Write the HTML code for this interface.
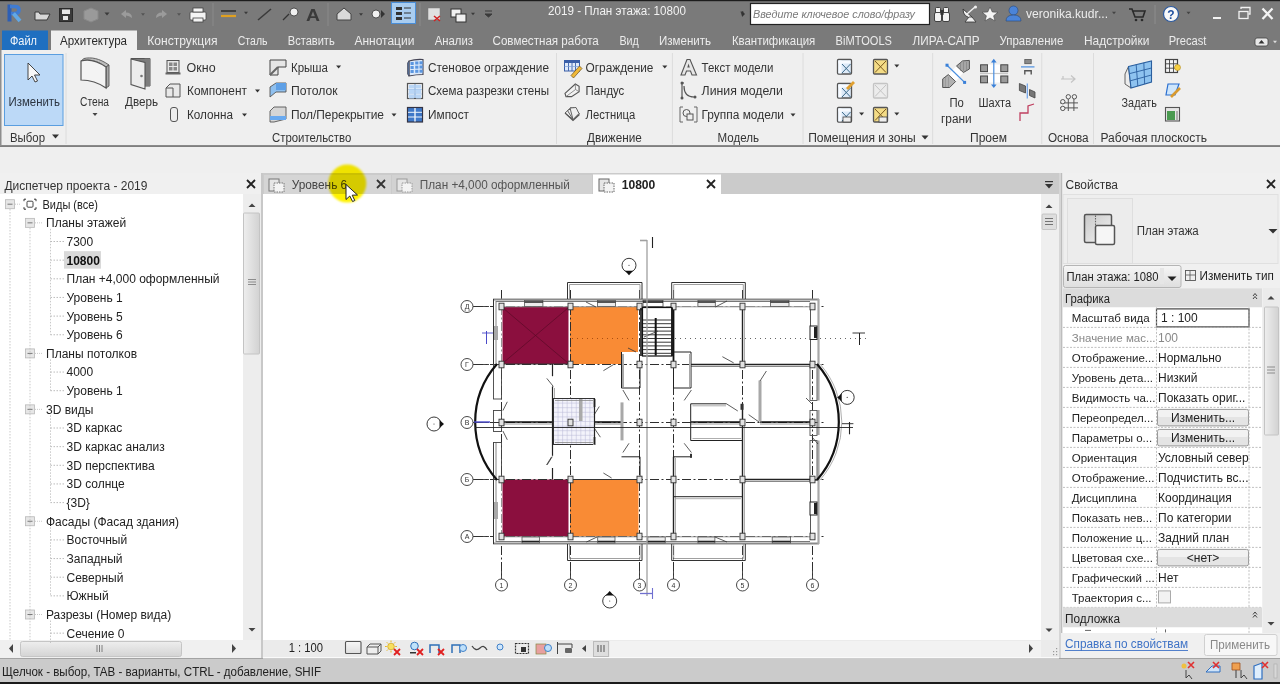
<!DOCTYPE html>
<html><head><meta charset="utf-8"><title>Revit</title>
<style>
html,body{margin:0;padding:0;width:1280px;height:684px;overflow:hidden;background:#777;}
svg{display:block;font-family:"Liberation Sans",sans-serif;}
</style></head><body>
<svg width="1280" height="684" viewBox="0 0 1280 684">
<defs><linearGradient id="thumbv" x1="0" y1="0" x2="1" y2="0"><stop offset="0" stop-color="#eeeeee"/><stop offset="1" stop-color="#d2d2d2"/></linearGradient><linearGradient id="thumbh" x1="0" y1="0" x2="0" y2="1"><stop offset="0" stop-color="#eeeeee"/><stop offset="1" stop-color="#d4d4d4"/></linearGradient><linearGradient id="docg" x1="0" y1="0" x2="1" y2="1"><stop offset="0" stop-color="#c8c8c8"/><stop offset="1" stop-color="#f4f4f4"/></linearGradient><linearGradient id="btng" x1="0" y1="0" x2="0" y2="1"><stop offset="0" stop-color="#f6f6f6"/><stop offset="1" stop-color="#dedede"/></linearGradient><filter id="blur1" x="-20%" y="-20%" width="140%" height="140%"><feGaussianBlur stdDeviation="0.8"/></filter></defs>
<rect x="0" y="0" width="1280" height="684" fill="#7a7a7a" />
<rect x="0" y="0" width="1280" height="1.2" fill="#1c1c1c" />
<rect x="0" y="50" width="1280" height="96" fill="#efefef" />
<rect x="0" y="145" width="1280" height="1.3" fill="#8a8a8a" />
<rect x="0" y="147" width="1280" height="26" fill="#efefef" />
<rect x="0" y="658.5" width="1280" height="23.5" fill="#cbcbcb" />
<rect x="0" y="682" width="1280" height="2" fill="#1a1a1a" />
<rect x="7.5" y="4.5" width="4" height="17" fill="#2d5fb5" />
<path d="M10,6.5 L15,6.5 Q19,6.5 19,10 Q19,13.5 15,13.5 L11,13.5" fill="none" stroke="#3f7bd2" stroke-width="3.6" />
<line x1="13.5" y1="13.5" x2="20" y2="21" stroke="#62a8e6" stroke-width="3.8" />
<path d="M35,12 L35,20 L47,20 L50,14 L40,14 L39,12 Z" fill="#d8d8d8" stroke="#3a3a3a" stroke-width="1" />
<rect x="59.5" y="8.5" width="13" height="13" fill="#3b3b3b" stroke="#2a2a2a" stroke-width="1" />
<rect x="62" y="9.5" width="8" height="4.5" fill="#e8e8e8" />
<rect x="63" y="16" width="5" height="4" fill="#e8e8e8" />
<path d="M84,11 L91,8 L98,11 L98,19 L91,22 L84,19 Z" fill="#9a9a9a" stroke="#8a8a8a" stroke-width="1" />
<path d="M104.5,12.5 L109.5,12.5 L107,15.5 Z" fill="#3a3a3a" />
<path d="M121,14 L126,10 L126,12.5 Q132,12.5 132,18 Q129,15.5 126,15.5 L126,18 Z" fill="#9b9b9b" />
<path d="M141.0,13.25 L145.0,13.25 L143,15.75 Z" fill="#555" />
<path d="M167,14 L162,10 L162,12.5 Q156,12.5 156,18 Q159,15.5 162,15.5 L162,18 Z" fill="#9b9b9b" />
<path d="M177.0,13.25 L181.0,13.25 L179,15.75 Z" fill="#555" />
<rect x="190" y="12" width="16" height="8" fill="#f4f4f4" stroke="#444" stroke-width="0.8" rx="1" />
<rect x="193" y="8" width="10" height="4" fill="#f4f4f4" stroke="#444" stroke-width="0.8" />
<rect x="193" y="18" width="10" height="4" fill="#f4f4f4" stroke="#444" stroke-width="0.8" />
<line x1="213" y1="3" x2="213" y2="26" stroke="#8a8a8a" stroke-width="1" />
<line x1="221" y1="11" x2="236" y2="11" stroke="#2b2b2b" stroke-width="1.5" />
<line x1="221" y1="16" x2="236" y2="16" stroke="#e0a020" stroke-width="2.2" />
<path d="M244.0,11.75 L248.0,11.75 L246,14.25 Z" fill="#3a3a3a" />
<line x1="258" y1="20" x2="271" y2="9" stroke="#3a3a3a" stroke-width="1.5" />
<circle cx="294" cy="12" r="4" fill="#f0f0f0" stroke="#333" stroke-width="0.8" />
<path d="M283,20 L289,14" fill="none" stroke="#333" stroke-width="1.2" />
<text x="306" y="21" font-size="17" fill="#3a3a3a" textLength="14" lengthAdjust="spacingAndGlyphs" font-weight="bold" >A</text>
<line x1="328" y1="3" x2="328" y2="26" stroke="#8a8a8a" stroke-width="1" />
<path d="M337,14 L344,8 L351,14 L351,20 L337,20 Z" fill="#d9d9d9" stroke="#444" stroke-width="1" />
<path d="M359.0,13.25 L363.0,13.25 L361,15.75 Z" fill="#3a3a3a" />
<circle cx="376" cy="14" r="4" fill="#f2f2f2" stroke="#333" stroke-width="0.8" />
<path d="M381,10 L385,14 L381,18 Z" fill="#333" />
<rect x="391.5" y="2.5" width="24" height="21" fill="#a9cdf0" stroke="#4a8ed8" stroke-width="1" />
<rect x="396" y="7" width="6" height="3" fill="#333" />
<rect x="396" y="12" width="6" height="3" fill="#333" />
<rect x="396" y="17" width="6" height="3" fill="#333" />
<line x1="404" y1="8" x2="411" y2="8" stroke="#333" stroke-width="1" />
<line x1="404" y1="13" x2="411" y2="13" stroke="#333" stroke-width="1" />
<line x1="404" y1="18" x2="411" y2="18" stroke="#333" stroke-width="1" />
<line x1="420" y1="3" x2="420" y2="26" stroke="#8a8a8a" stroke-width="1" />
<rect x="428" y="8" width="12" height="12" fill="#e0e0e0" stroke="#777" stroke-width="0.5" />
<path d="M434,16 L440,21 M440,16 L434,21" fill="none" stroke="#d02020" stroke-width="1.5" />
<rect x="451" y="9" width="10" height="8" fill="#f0f0f0" stroke="#333" stroke-width="1" />
<rect x="456" y="14" width="10" height="8" fill="#f0f0f0" stroke="#333" stroke-width="1" />
<path d="M471.0,12.75 L475.0,12.75 L473,15.25 Z" fill="#3a3a3a" />
<path d="M485,11 L492,11 M485,14 L492,14 L488.5,17 Z" fill="#3a3a3a" stroke="#3a3a3a" stroke-width="1" />
<text x="548" y="15.3" font-size="12" fill="#f2f2f2" textLength="138" lengthAdjust="spacingAndGlyphs" >2019 - План этажа: 10800</text>
<path d="M740.5,11.5 L743.5,11.5 L742,16.5 Z" fill="#3a3a3a" />
<path d="M742,11 L745,14 L742,17 Z" fill="#333" />
<rect x="750.5" y="3.5" width="179" height="21" fill="#ffffff" stroke="#222" stroke-width="1.2" />
<text x="753" y="18" font-size="11.5" fill="#7a7a7a" textLength="162" lengthAdjust="spacingAndGlyphs" font-style="italic" >Введите ключевое слово/фразу</text>
<rect x="935.5" y="7.5" width="5" height="6" fill="#f2f2f2" stroke="#333" stroke-width="0.9" rx="1" />
<rect x="943.5" y="7.5" width="5" height="6" fill="#f2f2f2" stroke="#333" stroke-width="0.9" rx="1" />
<rect x="934.5" y="12.5" width="7" height="9" fill="#f2f2f2" stroke="#333" stroke-width="0.9" rx="1.5" />
<rect x="942.5" y="12.5" width="7" height="9" fill="#f2f2f2" stroke="#333" stroke-width="0.9" rx="1.5" />
<rect x="940.5" y="10" width="3" height="5" fill="#333" />
<path d="M963,9 Q963,18 973,18 Z" fill="#f0f0f0" stroke="#333" stroke-width="0.9" />
<line x1="967" y1="14" x2="975" y2="7" stroke="#f0f0f0" stroke-width="1.5" />
<circle cx="975.5" cy="7" r="1.5" fill="#f0f0f0" />
<path d="M965,22 L969,17 L972,17 L976,22 Z" fill="#f0f0f0" stroke="#333" stroke-width="0.8" />
<path d="M990,7 L992.3,12 L998,12.3 L993.6,15.8 L995,21 L990,18 L985,21 L986.4,15.8 L982,12.3 L987.7,12 Z" fill="#f4f4f4" stroke="#444" stroke-width="0.6" />
<circle cx="1013.5" cy="10.5" r="4.5" fill="#4b84d8" stroke="#26487a" stroke-width="0.6" />
<path d="M1006,21 Q1006,15 1013.5,15 Q1021,15 1021,21 Z" fill="#4b84d8" stroke="#26487a" stroke-width="0.6" />
<text x="1026" y="18" font-size="12" fill="#ededed" textLength="82" lengthAdjust="spacingAndGlyphs" >veronika.kudr...</text>
<path d="M1112.0,11.75 L1116.0,11.75 L1114,14.25 Z" fill="#444" />
<path d="M1129,9 L1132,9 L1135,17 L1143,17 L1145,11 L1133,11" fill="none" stroke="#2a2a2a" stroke-width="1.6" />
<circle cx="1136" cy="20" r="1.3" fill="#2a2a2a" />
<circle cx="1142" cy="20" r="1.3" fill="#2a2a2a" />
<line x1="1155" y1="5" x2="1155" y2="24" stroke="#8d8d8d" stroke-width="1" />
<circle cx="1171" cy="14" r="7.5" fill="#f8f8f8" stroke="#2c5aa0" stroke-width="1.2" />
<text x="1171" y="19" font-size="12" fill="#1f4f9f" font-weight="bold" text-anchor="middle" >?</text>
<path d="M1186.5,11.75 L1190.5,11.75 L1188.5,14.25 Z" fill="#444" />
<rect x="1213" y="17" width="8" height="2" fill="#f2f2f2" />
<rect x="1239" y="11.5" width="9" height="7" fill="none" stroke="#f2f2f2" stroke-width="1.3" />
<path d="M1241,9 L1241,7.5 L1250,7.5 L1250,14 L1248.5,14" fill="none" stroke="#f2f2f2" stroke-width="1.3" />
<path d="M1262.5,8.5 L1272.5,19 M1272.5,8.5 L1262.5,19" fill="none" stroke="#f4f4f4" stroke-width="2.3" />
<rect x="2" y="30.5" width="46" height="19.5" fill="#1f6fc0" />
<text x="10" y="45" font-size="12" fill="#f2f6fb" textLength="27" lengthAdjust="spacingAndGlyphs" >Файл</text>
<rect x="51" y="30.5" width="86" height="20" fill="#efefef" />
<text x="60" y="45.3" font-size="12" fill="#2a2a2a" textLength="67" lengthAdjust="spacingAndGlyphs" >Архитектура</text>
<text x="147.2" y="45.3" font-size="12" fill="#ececec" textLength="70.3" lengthAdjust="spacingAndGlyphs" >Конструкция</text>
<text x="237.8" y="45.3" font-size="12" fill="#ececec" textLength="29.7" lengthAdjust="spacingAndGlyphs" >Сталь</text>
<text x="287.8" y="45.3" font-size="12" fill="#ececec" textLength="46.9" lengthAdjust="spacingAndGlyphs" >Вставить</text>
<text x="354.4" y="45.3" font-size="12" fill="#ececec" textLength="60" lengthAdjust="spacingAndGlyphs" >Аннотации</text>
<text x="434.7" y="45.3" font-size="12" fill="#ececec" textLength="38.3" lengthAdjust="spacingAndGlyphs" >Анализ</text>
<text x="492.5" y="45.3" font-size="12" fill="#ececec" textLength="106.3" lengthAdjust="spacingAndGlyphs" >Совместная работа</text>
<text x="619.4" y="45.3" font-size="12" fill="#ececec" textLength="19.4" lengthAdjust="spacingAndGlyphs" >Вид</text>
<text x="659" y="45.3" font-size="12" fill="#ececec" textLength="52" lengthAdjust="spacingAndGlyphs" >Изменить</text>
<text x="731.9" y="45.3" font-size="12" fill="#ececec" textLength="83.4" lengthAdjust="spacingAndGlyphs" >Квантификация</text>
<text x="835.6" y="45.3" font-size="12" fill="#ececec" textLength="56.3" lengthAdjust="spacingAndGlyphs" >BiMTOOLS</text>
<text x="912.5" y="45.3" font-size="12" fill="#ececec" textLength="67.1" lengthAdjust="spacingAndGlyphs" >ЛИРА-САПР</text>
<text x="999.5" y="45.3" font-size="12" fill="#ececec" textLength="63.8" lengthAdjust="spacingAndGlyphs" >Управление</text>
<text x="1084" y="45.3" font-size="12" fill="#ececec" textLength="65.4" lengthAdjust="spacingAndGlyphs" >Надстройки</text>
<text x="1168.7" y="45.3" font-size="12" fill="#ececec" textLength="37.7" lengthAdjust="spacingAndGlyphs" >Precast</text>
<rect x="1255" y="38" width="13" height="8" fill="#e8e8e8" stroke="#444" stroke-width="0.8" rx="2" />
<path d="M1258.5,43.5 L1261.5,40 L1264.5,43.5 Z" fill="#333" />
<path d="M1273.0,40.75 L1277.0,40.75 L1275,43.25 Z" fill="#ddd" />
<rect x="0" y="50" width="1.5" height="96" fill="#8e8e8e" />
<rect x="4.5" y="54.5" width="58.5" height="71" fill="#bcd9f7" stroke="#5a9ee0" stroke-width="1" />
<path d="M28,63 L28,80 L32,76 L35,82 L37.5,81 L34.5,75 L40,75 Z" fill="#f8f8f8" stroke="#333" stroke-width="0.9" />
<text x="8.5" y="106" font-size="12" fill="#2b3440" textLength="51.5" lengthAdjust="spacingAndGlyphs" >Изменить</text>
<text x="10" y="142" font-size="12" fill="#333" textLength="35" lengthAdjust="spacingAndGlyphs" >Выбор</text>
<path d="M52.0,134.5 L59.0,134.5 L55.5,138.5 Z" fill="#333" />
<line x1="66" y1="53" x2="66" y2="144" stroke="#dcdcdc" stroke-width="1" />
<line x1="556.5" y1="53" x2="556.5" y2="144" stroke="#dcdcdc" stroke-width="1" />
<line x1="672.4" y1="53" x2="672.4" y2="144" stroke="#dcdcdc" stroke-width="1" />
<line x1="803" y1="53" x2="803" y2="144" stroke="#dcdcdc" stroke-width="1" />
<line x1="932.7" y1="53" x2="932.7" y2="144" stroke="#dcdcdc" stroke-width="1" />
<line x1="1041.8" y1="53" x2="1041.8" y2="144" stroke="#dcdcdc" stroke-width="1" />
<line x1="1093.5" y1="53" x2="1093.5" y2="144" stroke="#dcdcdc" stroke-width="1" />
<path d="M81,61 L84,58.5 C91,57 99,58 109,65 L106,67 C96,60 88,59 81,61 Z" fill="#bdbdbd" stroke="#555" stroke-width="0.9" />
<path d="M106,67 L109,65 L109,86 L106,88 Z" fill="#a8a8a8" stroke="#555" stroke-width="0.9" />
<path d="M81,61 C88,59 96,60 106,67 L106,88 C96,81 88,80 81,80 Z" fill="#f3f3f3" stroke="#555" stroke-width="1.2" />
<text x="80" y="106" font-size="12" fill="#333" textLength="29" lengthAdjust="spacingAndGlyphs" >Стена</text>
<path d="M92.5,113.0 L97.5,113.0 L95,116.0 Z" fill="#444" />
<path d="M131,58.5 L150,58.5 L150,86 L145,86" fill="#7a7a7a" stroke="#555" stroke-width="1" />
<rect x="144.5" y="58.5" width="5.5" height="27.5" fill="#7d7d7d" />
<path d="M131,59 L145,62.5 L145,89 L131,84.5 Z" fill="#ececec" stroke="#555" stroke-width="1.1" />
<circle cx="141.5" cy="76" r="1.3" fill="#777" />
<text x="125" y="106" font-size="12" fill="#333" textLength="33" lengthAdjust="spacingAndGlyphs" >Дверь</text>
<rect x="167.0" y="60.5" width="12" height="12" fill="#e8e8e8" stroke="#555" stroke-width="1" />
<rect x="169.0" y="62.5" width="3.5" height="3.5" fill="#888" />
<rect x="173.5" y="62.5" width="3.5" height="3.5" fill="#888" />
<rect x="169.0" y="67" width="3.5" height="3.5" fill="#888" />
<rect x="173.5" y="67" width="3.5" height="3.5" fill="#888" />
<rect x="165.5" y="72.5" width="15" height="2" fill="#666" />
<text x="186.6" y="71.5" font-size="12" fill="#333" textLength="29" lengthAdjust="spacingAndGlyphs" >Окно</text>
<path d="M166,88 L170,84 L180,84 L180,97 L166,97 Z" fill="#e9e9e9" stroke="#555" stroke-width="1" />
<path d="M166,88 L173,88 L173,97" fill="none" stroke="#555" stroke-width="1" />
<text x="187" y="95" font-size="12" fill="#333" textLength="60" lengthAdjust="spacingAndGlyphs" >Компонент</text>
<path d="M255.0,89.5 L260.0,89.5 L257.5,92.5 Z" fill="#333" />
<rect x="170.5" y="107.5" width="7" height="14" fill="#eee" stroke="#555" stroke-width="1" rx="2.5" />
<text x="187" y="119.4" font-size="12" fill="#333" textLength="46" lengthAdjust="spacingAndGlyphs" >Колонна</text>
<path d="M242.0,113.5 L247.0,113.5 L244.5,116.5 Z" fill="#333" />
<path d="M270,60 L286,60 L286,67 L278,67 L278,75 L270,75 Z" fill="#e6e6e6" stroke="#444" stroke-width="1" />
<path d="M270,75 L278,67" fill="none" stroke="#666" stroke-width="2" />
<text x="291" y="71.5" font-size="12" fill="#333" textLength="37" lengthAdjust="spacingAndGlyphs" >Крыша</text>
<path d="M336.1,65.5 L341.1,65.5 L338.6,68.5 Z" fill="#333" />
<path d="M270,87 L276,83 L286,83 L286,92 L276,92 L270,97 Z" fill="#8fc0ef" stroke="#555" stroke-width="0.9" />
<rect x="276" y="83" width="10" height="7" fill="#5fa0e6" />
<text x="291" y="95" font-size="12" fill="#333" textLength="46.6" lengthAdjust="spacingAndGlyphs" >Потолок</text>
<path d="M270,111 L274,107 L286,107 L286,119 L274,122 L270,122 Z" fill="#d6d6d6" stroke="#555" stroke-width="0.9" />
<rect x="270" y="116" width="16" height="4" fill="#6aaaf0" />
<text x="291" y="119.4" font-size="12" fill="#333" textLength="93" lengthAdjust="spacingAndGlyphs" >Пол/Перекрытие</text>
<path d="M391.5,113.5 L396.5,113.5 L394,116.5 Z" fill="#333" />
<text x="272" y="142.2" font-size="12" fill="#333" textLength="79.3" lengthAdjust="spacingAndGlyphs" >Строительство</text>
<path d="M409,61 Q415,59 423,59.5 L423,74.5 Q416,74.5 409,76 Z" fill="#dbe9fa" stroke="#445" stroke-width="1.1" />
<path d="M407.5,63 L409,61 L409,76 L407.5,74 Z" fill="#5a7fb0" stroke="#445" stroke-width="0.7" />
<rect x="410.5" y="62" width="3.2" height="3" fill="#5b96e0" />
<rect x="415.2" y="61.5" width="3.2" height="3" fill="#5b96e0" />
<rect x="419.5" y="61.3" width="3.2" height="3" fill="#5b96e0" />
<rect x="410.5" y="66" width="3.2" height="3" fill="#5b96e0" />
<rect x="415.2" y="65.7" width="3.2" height="3" fill="#5b96e0" />
<rect x="419.5" y="65.5" width="3.2" height="3" fill="#5b96e0" />
<rect x="410.5" y="70" width="3.2" height="3" fill="#5b96e0" />
<rect x="415.2" y="69.8" width="3.2" height="3" fill="#5b96e0" />
<rect x="419.5" y="69.7" width="3.2" height="3" fill="#5b96e0" />
<text x="428" y="71.5" font-size="12" fill="#333" textLength="121" lengthAdjust="spacingAndGlyphs" >Стеновое ограждение</text>
<rect x="407.5" y="83.5" width="15" height="15" fill="#f2f6fc" stroke="#555" stroke-width="1.2" />
<rect x="409" y="85" width="5" height="3.5" fill="#b9d6f6" />
<rect x="416" y="85" width="5" height="3.5" fill="#b9d6f6" />
<rect x="409" y="90" width="5" height="3.5" fill="#b9d6f6" />
<rect x="416" y="90" width="5" height="3.5" fill="#b9d6f6" />
<rect x="409" y="95" width="5" height="3.5" fill="#b9d6f6" />
<rect x="416" y="95" width="5" height="3.5" fill="#b9d6f6" />
<line x1="415" y1="84" x2="415" y2="98" stroke="#6f9fd8" stroke-width="1" />
<line x1="408" y1="89.5" x2="422" y2="89.5" stroke="#9cc0ea" stroke-width="0.8" />
<line x1="408" y1="94" x2="422" y2="94" stroke="#9cc0ea" stroke-width="0.8" />
<text x="428" y="95" font-size="12" fill="#333" textLength="121" lengthAdjust="spacingAndGlyphs" >Схема разрезки стены</text>
<rect x="407.5" y="107.5" width="15" height="14.5" fill="#3f78c8" stroke="#334" stroke-width="1.2" />
<line x1="415" y1="108" x2="415" y2="121.5" stroke="#eef4fb" stroke-width="1.4" />
<line x1="408" y1="112.3" x2="422" y2="112.3" stroke="#eef4fb" stroke-width="1" />
<line x1="408" y1="117" x2="422" y2="117" stroke="#eef4fb" stroke-width="1" />
<text x="428" y="119.4" font-size="12" fill="#333" textLength="41" lengthAdjust="spacingAndGlyphs" >Импост</text>
<rect x="564.5" y="60.5" width="15" height="10.5" fill="#dfeafa" stroke="#3a5fa8" stroke-width="1" />
<rect x="564.5" y="60.5" width="15" height="2.5" fill="#3a5fa8" />
<line x1="568.5" y1="63" x2="568.5" y2="71" stroke="#3a5fa8" stroke-width="0.9" />
<line x1="572" y1="63" x2="572" y2="71" stroke="#3a5fa8" stroke-width="0.9" />
<line x1="575.5" y1="63" x2="575.5" y2="71" stroke="#3a5fa8" stroke-width="0.9" />
<line x1="564.5" y1="66.5" x2="579.5" y2="66.5" stroke="#7a9fd8" stroke-width="0.7" />
<path d="M571,75.5 L579.5,66 L582,68.5 L573.5,78 Z" fill="#f0b838" stroke="#6a5020" stroke-width="0.7" />
<text x="585.6" y="71.5" font-size="12" fill="#333" textLength="67.8" lengthAdjust="spacingAndGlyphs" >Ограждение</text>
<path d="M662.3,65.5 L667.3,65.5 L664.8,68.5 Z" fill="#333" />
<path d="M565,93.3 L575.3,84 L579.1,86.2 L579.1,91.7 L571.5,96.6 L566,96.6 Z" fill="#f2f2f2" stroke="#555" stroke-width="1.1" />
<path d="M575.3,84 L575.5,89.5 L579.1,91.7 M575.5,89.5 L566,96.6" fill="none" stroke="#777" stroke-width="0.8" />
<text x="585.6" y="95" font-size="12" fill="#333" textLength="38.7" lengthAdjust="spacingAndGlyphs" >Пандус</text>
<path d="M565.0,113.0 L571.0,107.5 L579,113.5 L573,119.5 Z" fill="#efefef" stroke="#555" stroke-width="0.9" />
<path d="M567.5,110.5 L573.5,107.5 L579,113.5 L573,119.5 Z" fill="#efefef" stroke="#555" stroke-width="0.9" />
<path d="M570.0,108.0 L576.0,107.5 L579,113.5 L573,119.5 Z" fill="#efefef" stroke="#555" stroke-width="0.9" />
<path d="M565,113 L573,120.5 L579.5,114.5" fill="none" stroke="#555" stroke-width="1.1" />
<text x="585.6" y="119.4" font-size="12" fill="#333" textLength="49.6" lengthAdjust="spacingAndGlyphs" >Лестница</text>
<text x="587" y="142.2" font-size="12" fill="#333" textLength="54.8" lengthAdjust="spacingAndGlyphs" >Движение</text>
<path d="M681,75 L687,59.5 L690,59.5 L696.5,75 L692,75 L690.5,71 L686.5,71 L685,75 Z" fill="#e6e6e6" stroke="#555" stroke-width="1.1" />
<path d="M687.3,67.5 L688.5,63.5 L689.8,67.5 Z" fill="#555" />
<text x="701.6" y="71.5" font-size="12" fill="#333" textLength="71.8" lengthAdjust="spacingAndGlyphs" >Текст модели</text>
<path d="M682,83 L682,98 M682,83 Q682,83 684,83 M684,86 Q684,97 694,97" fill="none" stroke="#555" stroke-width="1.2" />
<circle cx="682" cy="83" r="1.5" fill="#555" />
<circle cx="682" cy="98" r="1.5" fill="#555" />
<circle cx="695" cy="97" r="1.5" fill="#555" />
<text x="701.6" y="95" font-size="12" fill="#333" textLength="81.3" lengthAdjust="spacingAndGlyphs" >Линия  модели</text>
<path d="M683,107 L680,107 L680,122 L683,122 M694,107 L697,107 L697,122 L694,122" fill="none" stroke="#666" stroke-width="1" />
<circle cx="686.5" cy="113" r="3.5" fill="none" stroke="#555" stroke-width="1" />
<rect x="687" y="114" width="6" height="6" fill="#eee" stroke="#555" stroke-width="1" />
<text x="701.6" y="119.4" font-size="12" fill="#333" textLength="82.4" lengthAdjust="spacingAndGlyphs" >Группа модели</text>
<path d="M790.5,113.5 L795.5,113.5 L793,116.5 Z" fill="#333" />
<text x="717.5" y="142.2" font-size="12" fill="#333" textLength="41.5" lengthAdjust="spacingAndGlyphs" >Модель</text>
<rect x="837.5" y="59.5" width="14" height="14.5" fill="#ddeaf8" stroke="#555" stroke-width="1.3" rx="1" />
<rect x="838.5" y="60.5" width="3" height="13" fill="#f8fbff" />
<rect x="838.5" y="60.5" width="12" height="3" fill="#f8fbff" />
<line x1="842" y1="64" x2="850.5" y2="73" stroke="#3d6a8a" stroke-width="1" />
<line x1="850.5" y1="64" x2="842" y2="73" stroke="#3d6a8a" stroke-width="1" />
<rect x="873.5" y="59.5" width="14" height="14.5" fill="#f4dc86" stroke="#555" stroke-width="1.3" rx="1" />
<line x1="875" y1="61" x2="886" y2="72.5" stroke="#7a5a20" stroke-width="1" />
<line x1="886" y1="61" x2="875" y2="72.5" stroke="#7a5a20" stroke-width="1" />
<path d="M894.3,64.5 L899.3,64.5 L896.8,67.5 Z" fill="#333" />
<rect x="837.5" y="83.5" width="14" height="14.5" fill="#ddeaf8" stroke="#555" stroke-width="1.3" rx="1" />
<rect x="838.5" y="84.5" width="3" height="13" fill="#f8fbff" />
<rect x="838.5" y="84.5" width="12" height="3" fill="#f8fbff" />
<line x1="842" y1="88" x2="850.5" y2="97" stroke="#3d6a8a" stroke-width="1" />
<line x1="850.5" y1="88" x2="842" y2="97" stroke="#3d6a8a" stroke-width="1" />
<path d="M846,88 L853,81 L855,83 L848,90 Z" fill="#e0a030" />
<rect x="873.5" y="83.5" width="14" height="14.5" fill="#ececec" stroke="#c4c4c4" stroke-width="1.3" rx="1" />
<line x1="875" y1="85" x2="886" y2="96.5" stroke="#c4c4c4" stroke-width="1" />
<line x1="886" y1="85" x2="875" y2="96.5" stroke="#c4c4c4" stroke-width="1" />
<rect x="837.5" y="107.5" width="14" height="14.5" fill="#ddeaf8" stroke="#555" stroke-width="1.3" rx="1" />
<rect x="838.5" y="108.5" width="3" height="13" fill="#f8fbff" />
<rect x="838.5" y="108.5" width="12" height="3" fill="#f8fbff" />
<line x1="842" y1="112" x2="850.5" y2="121" stroke="#3d6a8a" stroke-width="1" />
<line x1="850.5" y1="112" x2="842" y2="121" stroke="#3d6a8a" stroke-width="1" />
<rect x="843" y="117" width="8" height="5" fill="#eee" stroke="#444" stroke-width="0.8" />
<path d="M859.1,112.5 L864.1,112.5 L861.6,115.5 Z" fill="#333" />
<rect x="873.5" y="107.5" width="14" height="14.5" fill="#f4dc86" stroke="#555" stroke-width="1.3" rx="1" />
<line x1="875" y1="109" x2="886" y2="120.5" stroke="#7a5a20" stroke-width="1" />
<line x1="886" y1="109" x2="875" y2="120.5" stroke="#7a5a20" stroke-width="1" />
<rect x="879" y="117" width="8" height="5" fill="#eee" stroke="#444" stroke-width="0.8" />
<path d="M894.3,112.5 L899.3,112.5 L896.8,115.5 Z" fill="#333" />
<text x="808.2" y="142.2" font-size="12" fill="#333" textLength="107.6" lengthAdjust="spacingAndGlyphs" >Помещения и зоны</text>
<path d="M921.5,135.5 L928.5,135.5 L925,139.5 Z" fill="#333" />
<path d="M948.3,74.6 L956.5,66 L963.4,72.5 L955.6,81.5 Z" fill="#ffffff" />
<path d="M956.5,66 L962.5,60.9 L969.4,60.4 L969.4,69 L963.4,72.5 Z" fill="#a6a6a6" stroke="#555" stroke-width="1" />
<line x1="960.5" y1="62" x2="960.5" y2="71" stroke="#777" stroke-width="0.5" />
<line x1="963.5" y1="62" x2="963.5" y2="71" stroke="#777" stroke-width="0.5" />
<line x1="966.5" y1="62" x2="966.5" y2="71" stroke="#777" stroke-width="0.5" />
<path d="M942.7,78.9 L948.3,74.6 L955.6,81.5 L949.6,87.5 L942.7,87.5 Z" fill="#b0b0b0" stroke="#555" stroke-width="1" />
<line x1="945.5" y1="77" x2="945.5" y2="87" stroke="#888" stroke-width="0.5" />
<line x1="948.5" y1="77" x2="948.5" y2="87" stroke="#888" stroke-width="0.5" />
<line x1="947" y1="65.2" x2="964.6" y2="82.4" stroke="#4a8fe0" stroke-width="1.3" />
<rect x="945.5" y="63.7" width="3" height="3" fill="#3a80d8" />
<rect x="963.1" y="80.9" width="3" height="3" fill="#3a80d8" />
<text x="949.4" y="106.9" font-size="12" fill="#333" textLength="14.4" lengthAdjust="spacingAndGlyphs" >По</text>
<text x="941" y="122.7" font-size="12" fill="#333" textLength="30.6" lengthAdjust="spacingAndGlyphs" >грани</text>
<rect x="980.6" y="64.8" width="7" height="6.8" fill="#9a9a9a" stroke="#444" stroke-width="1" />
<rect x="1000.8" y="64.8" width="7" height="6.8" fill="#9a9a9a" stroke="#444" stroke-width="1" />
<rect x="980.6" y="76.0" width="7" height="6.8" fill="#9a9a9a" stroke="#444" stroke-width="1" />
<rect x="1000.8" y="76.0" width="7" height="6.8" fill="#9a9a9a" stroke="#444" stroke-width="1" />
<rect x="988" y="64.5" width="12" height="18" fill="#fff" />
<line x1="980" y1="73.5" x2="1008" y2="73.5" stroke="#c8c8c8" stroke-width="1.2" />
<line x1="993.8" y1="61" x2="993.8" y2="86" stroke="#4a8fe0" stroke-width="1.2" />
<path d="M991,62.5 L993.8,58.8 L996.6,62.5 Z M991,84.5 L993.8,88 L996.6,84.5 Z" fill="#3a80d8" />
<text x="978.5" y="106.9" font-size="12" fill="#333" textLength="32.5" lengthAdjust="spacingAndGlyphs" >Шахта</text>
<rect x="1024.8" y="59.5" width="6.4" height="4.2" fill="#8a8a8a" stroke="#555" stroke-width="0.8" />
<path d="M1024.8,74.6 L1024.8,70.8 L1031.2,70.8 L1031.2,74.6" fill="none" stroke="#555" stroke-width="1.4" />
<line x1="1021" y1="66.9" x2="1034.5" y2="66.9" stroke="#4a8fe0" stroke-width="1.2" />
<path d="M1019.4,83.5 L1025.5,86 L1025.5,93 L1019.4,90.5 Z" fill="#777" stroke="#444" stroke-width="0.8" />
<path d="M1029.5,89.5 L1035,92 L1035,98 L1029.5,95.5 Z" fill="#777" stroke="#444" stroke-width="0.8" />
<line x1="1027.3" y1="83.5" x2="1027.3" y2="98.5" stroke="#6aa0e8" stroke-width="1.2" />
<path d="M1020,121 L1020,113 L1028,113 L1028,106 L1034,104" fill="none" stroke="#c04060" stroke-width="1.3" />
<text x="970" y="142.2" font-size="12" fill="#333" textLength="37" lengthAdjust="spacingAndGlyphs" >Проем</text>
<path d="M1061,79 L1075,79 M1071,75.5 L1075,79 L1071,82.5 M1063,76 L1063,79" fill="none" stroke="#c4c4c4" stroke-width="1.2" />
<line x1="1060" y1="102.9" x2="1078" y2="102.9" stroke="#555" stroke-width="1" />
<line x1="1060" y1="107.9" x2="1078" y2="107.9" stroke="#555" stroke-width="1" />
<line x1="1068.3" y1="99" x2="1068.3" y2="111" stroke="#555" stroke-width="1" />
<line x1="1073.9" y1="99" x2="1073.9" y2="111" stroke="#555" stroke-width="1" />
<circle cx="1068.3" cy="96.8" r="2.2" fill="#f0f0f0" stroke="#555" stroke-width="1" />
<circle cx="1074.4" cy="96.8" r="2.2" fill="#f0f0f0" stroke="#555" stroke-width="1" />
<circle cx="1062.8" cy="101.7" r="2.2" fill="#f0f0f0" stroke="#555" stroke-width="1" />
<circle cx="1062.8" cy="108.4" r="2.2" fill="#f0f0f0" stroke="#555" stroke-width="1" />
<text x="1048" y="142.2" font-size="12" fill="#333" textLength="40.6" lengthAdjust="spacingAndGlyphs" >Основа</text>
<path d="M1125,74 L1128.5,66.5 L1131,88 L1125,84 Z" fill="#ececec" stroke="#555" stroke-width="0.9" />
<path d="M1128.5,66.5 L1151.5,61 L1151.5,82 L1131,88 Z" fill="#8ec3f0" stroke="#2a5f9f" stroke-width="1.1" />
<line x1="1136.1666666666667" y1="64.66666666666667" x2="1137.8333333333333" y2="86.0" stroke="#2a5f9f" stroke-width="0.9" />
<line x1="1129.3333333333333" y1="73.66666666666667" x2="1151.5" y2="68.0" stroke="#2a5f9f" stroke-width="0.9" />
<line x1="1143.8333333333333" y1="62.833333333333336" x2="1144.6666666666667" y2="84.0" stroke="#2a5f9f" stroke-width="0.9" />
<line x1="1130.1666666666667" y1="80.83333333333333" x2="1151.5" y2="75.0" stroke="#2a5f9f" stroke-width="0.9" />
<text x="1121.6" y="106.9" font-size="12" fill="#333" textLength="35.2" lengthAdjust="spacingAndGlyphs" >Задать</text>
<rect x="1165.5" y="59.5" width="12" height="13" fill="#f4f4f4" stroke="#444" stroke-width="1.2" />
<line x1="1169.5" y1="59.5" x2="1169.5" y2="72.5" stroke="#444" stroke-width="0.9" />
<line x1="1173.5" y1="59.5" x2="1173.5" y2="72.5" stroke="#444" stroke-width="0.9" />
<line x1="1165.5" y1="63.8" x2="1177.5" y2="63.8" stroke="#444" stroke-width="0.9" />
<line x1="1165.5" y1="68.2" x2="1177.5" y2="68.2" stroke="#444" stroke-width="0.9" />
<circle cx="1177.5" cy="67.5" r="3" fill="#f8d040" stroke="#b08a20" stroke-width="0.6" />
<path d="M1168,84 L1179,84 L1175,95 L1166,95 Z" fill="#cfe6fb" stroke="#2a6fd0" stroke-width="1.2" />
<line x1="1171" y1="97" x2="1180" y2="88" stroke="#d89a30" stroke-width="2.6" />
<rect x="1165.5" y="107.5" width="14" height="13.5" fill="#e6e6e6" stroke="#555" stroke-width="1.1" />
<rect x="1167" y="111" width="8" height="9" fill="#4a9a50" />
<line x1="1177" y1="111" x2="1177" y2="120" stroke="#777" stroke-width="1" />
<text x="1100.5" y="142.2" font-size="12" fill="#333" textLength="106.5" lengthAdjust="spacingAndGlyphs" >Рабочая плоскость</text>
<rect x="0" y="173" width="262" height="485" fill="#f0f0f0" />
<rect x="0" y="194" width="243" height="446" fill="#ffffff" />
<text x="4.4" y="189.6" font-size="12" fill="#333" textLength="143" lengthAdjust="spacingAndGlyphs" >Диспетчер проекта - 2019</text>
<path d="M247,180 L255,188 M255,180 L247,188" fill="none" stroke="#222" stroke-width="1.8" />
<rect x="243" y="194" width="18" height="446" fill="#ededed" />
<path d="M248.5,207 L252,203.5 L255.5,207 Z" fill="#444" />
<rect x="243.5" y="213" width="16" height="141" fill="url(#thumbv)" stroke="#c4c4c4" stroke-width="1" rx="1" />
<line x1="248" y1="279.5" x2="256" y2="279.5" stroke="#777" stroke-width="0.8" />
<line x1="248" y1="282" x2="256" y2="282" stroke="#777" stroke-width="0.8" />
<line x1="248" y1="284.5" x2="256" y2="284.5" stroke="#777" stroke-width="0.8" />
<path d="M248.5,628 L252,631.5 L255.5,628 Z" fill="#444" />
<rect x="0" y="640" width="243" height="17" fill="#f0f0f0" />
<path d="M13,644 L9,648.5 L13,653 Z" fill="#444" />
<rect x="20.5" y="641.5" width="161" height="15" fill="url(#thumbh)" stroke="#c5c5c5" stroke-width="1" rx="2" />
<line x1="97" y1="645" x2="97" y2="652" stroke="#666" stroke-width="0.8" />
<line x1="99.5" y1="645" x2="99.5" y2="652" stroke="#666" stroke-width="0.8" />
<line x1="102" y1="645" x2="102" y2="652" stroke="#666" stroke-width="0.8" />
<path d="M232,644 L236,648.5 L232,653 Z" fill="#444" />
<rect x="261" y="173" width="2" height="485" fill="#c8c8c8" />
<rect x="5.5" y="199.7" width="9" height="9" fill="#e6e6e6" stroke="#b8b8b8" stroke-width="0.8" />
<line x1="7.5" y1="204.2" x2="12.5" y2="204.2" stroke="#777" stroke-width="1" />
<line x1="15" y1="204.2" x2="21" y2="204.2" stroke="#bbb" stroke-width="0.8" stroke-dasharray="1,1" />
<path d="M24,201.2 L24,199.2 L26,199.2 M34,199.2 L36,199.2 L36,201.2 M36,207.2 L36,209.2 L34,209.2 M26,209.2 L24,209.2 L24,207.2" fill="none" stroke="#333" stroke-width="1" />
<rect x="27" y="201.2" width="6" height="6" fill="none" stroke="#333" stroke-width="0.9" rx="1" />
<text x="42.5" y="208.6" font-size="12" fill="#222" textLength="55.5" lengthAdjust="spacingAndGlyphs" >Виды (все)</text>
<rect x="25.5" y="218.35" width="9" height="9" fill="#e6e6e6" stroke="#b8b8b8" stroke-width="0.8" />
<line x1="27.5" y1="222.85" x2="32.5" y2="222.85" stroke="#777" stroke-width="1" />
<line x1="35" y1="222.85" x2="43" y2="222.85" stroke="#bbb" stroke-width="0.8" stroke-dasharray="1,1" />
<text x="46" y="227.25" font-size="12" fill="#222" >Планы этажей</text>
<line x1="50.5" y1="241.5" x2="64" y2="241.5" stroke="#aaa" stroke-width="0.8" stroke-dasharray="1.5,1.5" />
<text x="66.5" y="245.9" font-size="12" fill="#222" >7300</text>
<line x1="50.5" y1="260.15" x2="64" y2="260.15" stroke="#aaa" stroke-width="0.8" stroke-dasharray="1.5,1.5" />
<rect x="64" y="251.14999999999998" width="37" height="17.5" fill="#d9d9d9" />
<text x="66.5" y="264.54999999999995" font-size="12" fill="#111" font-weight="bold" >10800</text>
<line x1="50.5" y1="278.79999999999995" x2="64" y2="278.79999999999995" stroke="#aaa" stroke-width="0.8" stroke-dasharray="1.5,1.5" />
<text x="66.5" y="283.19999999999993" font-size="12" fill="#222" >План +4,000 оформленный</text>
<line x1="50.5" y1="297.45" x2="64" y2="297.45" stroke="#aaa" stroke-width="0.8" stroke-dasharray="1.5,1.5" />
<text x="66.5" y="301.84999999999997" font-size="12" fill="#222" >Уровень 1</text>
<line x1="50.5" y1="316.09999999999997" x2="64" y2="316.09999999999997" stroke="#aaa" stroke-width="0.8" stroke-dasharray="1.5,1.5" />
<text x="66.5" y="320.49999999999994" font-size="12" fill="#222" >Уровень 5</text>
<line x1="50.5" y1="334.75" x2="64" y2="334.75" stroke="#aaa" stroke-width="0.8" stroke-dasharray="1.5,1.5" />
<text x="66.5" y="339.15" font-size="12" fill="#222" >Уровень 6</text>
<rect x="25.5" y="348.9" width="9" height="9" fill="#e6e6e6" stroke="#b8b8b8" stroke-width="0.8" />
<line x1="27.5" y1="353.4" x2="32.5" y2="353.4" stroke="#777" stroke-width="1" />
<line x1="35" y1="353.4" x2="43" y2="353.4" stroke="#bbb" stroke-width="0.8" stroke-dasharray="1,1" />
<text x="46" y="357.79999999999995" font-size="12" fill="#222" >Планы потолков</text>
<line x1="50.5" y1="372.04999999999995" x2="64" y2="372.04999999999995" stroke="#aaa" stroke-width="0.8" stroke-dasharray="1.5,1.5" />
<text x="66.5" y="376.44999999999993" font-size="12" fill="#222" >4000</text>
<line x1="50.5" y1="390.7" x2="64" y2="390.7" stroke="#aaa" stroke-width="0.8" stroke-dasharray="1.5,1.5" />
<text x="66.5" y="395.09999999999997" font-size="12" fill="#222" >Уровень 1</text>
<rect x="25.5" y="404.84999999999997" width="9" height="9" fill="#e6e6e6" stroke="#b8b8b8" stroke-width="0.8" />
<line x1="27.5" y1="409.34999999999997" x2="32.5" y2="409.34999999999997" stroke="#777" stroke-width="1" />
<line x1="35" y1="409.34999999999997" x2="43" y2="409.34999999999997" stroke="#bbb" stroke-width="0.8" stroke-dasharray="1,1" />
<text x="46" y="413.74999999999994" font-size="12" fill="#222" >3D виды</text>
<line x1="50.5" y1="428.0" x2="64" y2="428.0" stroke="#aaa" stroke-width="0.8" stroke-dasharray="1.5,1.5" />
<text x="66.5" y="432.4" font-size="12" fill="#222" >3D каркас</text>
<line x1="50.5" y1="446.65" x2="64" y2="446.65" stroke="#aaa" stroke-width="0.8" stroke-dasharray="1.5,1.5" />
<text x="66.5" y="451.04999999999995" font-size="12" fill="#222" >3D каркас анализ</text>
<line x1="50.5" y1="465.29999999999995" x2="64" y2="465.29999999999995" stroke="#aaa" stroke-width="0.8" stroke-dasharray="1.5,1.5" />
<text x="66.5" y="469.69999999999993" font-size="12" fill="#222" >3D перспектива</text>
<line x1="50.5" y1="483.95" x2="64" y2="483.95" stroke="#aaa" stroke-width="0.8" stroke-dasharray="1.5,1.5" />
<text x="66.5" y="488.34999999999997" font-size="12" fill="#222" >3D солнце</text>
<line x1="50.5" y1="502.59999999999997" x2="64" y2="502.59999999999997" stroke="#aaa" stroke-width="0.8" stroke-dasharray="1.5,1.5" />
<text x="66.5" y="506.99999999999994" font-size="12" fill="#222" >{3D}</text>
<rect x="25.5" y="516.75" width="9" height="9" fill="#e6e6e6" stroke="#b8b8b8" stroke-width="0.8" />
<line x1="27.5" y1="521.25" x2="32.5" y2="521.25" stroke="#777" stroke-width="1" />
<line x1="35" y1="521.25" x2="43" y2="521.25" stroke="#bbb" stroke-width="0.8" stroke-dasharray="1,1" />
<text x="46" y="525.65" font-size="12" fill="#222" >Фасады (Фасад здания)</text>
<line x1="50.5" y1="539.9" x2="64" y2="539.9" stroke="#aaa" stroke-width="0.8" stroke-dasharray="1.5,1.5" />
<text x="66.5" y="544.3" font-size="12" fill="#222" >Восточный</text>
<line x1="50.5" y1="558.55" x2="64" y2="558.55" stroke="#aaa" stroke-width="0.8" stroke-dasharray="1.5,1.5" />
<text x="66.5" y="562.9499999999999" font-size="12" fill="#222" >Западный</text>
<line x1="50.5" y1="577.2" x2="64" y2="577.2" stroke="#aaa" stroke-width="0.8" stroke-dasharray="1.5,1.5" />
<text x="66.5" y="581.6" font-size="12" fill="#222" >Северный</text>
<line x1="50.5" y1="595.8499999999999" x2="64" y2="595.8499999999999" stroke="#aaa" stroke-width="0.8" stroke-dasharray="1.5,1.5" />
<text x="66.5" y="600.2499999999999" font-size="12" fill="#222" >Южный</text>
<rect x="25.5" y="610.0" width="9" height="9" fill="#e6e6e6" stroke="#b8b8b8" stroke-width="0.8" />
<line x1="27.5" y1="614.5" x2="32.5" y2="614.5" stroke="#777" stroke-width="1" />
<line x1="35" y1="614.5" x2="43" y2="614.5" stroke="#bbb" stroke-width="0.8" stroke-dasharray="1,1" />
<text x="46" y="618.9" font-size="12" fill="#222" >Разрезы (Номер вида)</text>
<line x1="50.5" y1="633.15" x2="64" y2="633.15" stroke="#aaa" stroke-width="0.8" stroke-dasharray="1.5,1.5" />
<text x="66.5" y="637.55" font-size="12" fill="#222" >Сечение 0</text>
<line x1="10" y1="209" x2="10" y2="640" stroke="#bbb" stroke-width="0.8" stroke-dasharray="1.5,1.5" />
<line x1="50.5" y1="228.85" x2="50.5" y2="334.75" stroke="#bbb" stroke-width="0.8" stroke-dasharray="1.5,1.5" />
<line x1="50.5" y1="359.4" x2="50.5" y2="390.7" stroke="#bbb" stroke-width="0.8" stroke-dasharray="1.5,1.5" />
<line x1="50.5" y1="415.34999999999997" x2="50.5" y2="502.59999999999997" stroke="#bbb" stroke-width="0.8" stroke-dasharray="1.5,1.5" />
<line x1="50.5" y1="527.25" x2="50.5" y2="595.8499999999999" stroke="#bbb" stroke-width="0.8" stroke-dasharray="1.5,1.5" />
<line x1="50.5" y1="620.5" x2="50.5" y2="644.3399999999999" stroke="#bbb" stroke-width="0.8" stroke-dasharray="1.5,1.5" />
<line x1="30" y1="227.85" x2="30" y2="640" stroke="#bbb" stroke-width="0.8" stroke-dasharray="1.5,1.5" />
<rect x="263" y="173" width="796" height="21" fill="#cbcbcb" />
<rect x="263" y="194" width="778" height="446" fill="#ffffff" />
<rect x="264" y="175" width="127" height="19" fill="#d5d5d5" />
<rect x="269.0" y="179.0" width="10" height="12" fill="#e6e6e6" stroke="#777" stroke-width="1" />
<rect x="274.0" y="183.0" width="10" height="9" fill="#f4f4f4" stroke="#777" stroke-width="1" stroke-dasharray="1.5,1"/>
<text x="291.7" y="189" font-size="12" fill="#444" textLength="55.5" lengthAdjust="spacingAndGlyphs" >Уровень 6</text>
<path d="M377,180 L385,188 M385,180 L377,188" fill="none" stroke="#333" stroke-width="1.8" />
<rect x="392" y="175" width="200" height="19" fill="#d2d2d2" />
<rect x="397.0" y="179.0" width="10" height="12" fill="#e6e6e6" stroke="#999" stroke-width="1" />
<rect x="402.0" y="183.0" width="10" height="9" fill="#f4f4f4" stroke="#999" stroke-width="1" stroke-dasharray="1.5,1"/>
<text x="419.8" y="189" font-size="12" fill="#555" textLength="150" lengthAdjust="spacingAndGlyphs" >План +4,000 оформленный</text>
<rect x="593" y="174.5" width="128" height="20" fill="#ffffff" />
<rect x="599.0" y="179.0" width="10" height="12" fill="#e6e6e6" stroke="#666" stroke-width="1" />
<rect x="604.0" y="183.0" width="10" height="9" fill="#f4f4f4" stroke="#666" stroke-width="1" stroke-dasharray="1.5,1"/>
<text x="621.7" y="189" font-size="12" fill="#222" textLength="33.6" lengthAdjust="spacingAndGlyphs" font-weight="bold" >10800</text>
<path d="M707,180 L715,188 M715,180 L707,188" fill="none" stroke="#222" stroke-width="1.8" />
<rect x="1045" y="181" width="8" height="1.2" fill="#333" />
<path d="M1045,184 L1053,184 L1049,188.5 Z" fill="#333" />
<rect x="1041" y="194" width="18" height="446" fill="#efefef" />
<path d="M1045.5,208 L1049,204.5 L1052.5,208 Z" fill="#444" />
<rect x="1042" y="214" width="14.5" height="15.5" fill="#dedede" stroke="#bdbdbd" stroke-width="0.8" rx="1" />
<line x1="1045" y1="218.5" x2="1053" y2="218.5" stroke="#666" stroke-width="0.9" />
<line x1="1045" y1="221.5" x2="1053" y2="221.5" stroke="#666" stroke-width="0.9" />
<line x1="1045" y1="224.5" x2="1053" y2="224.5" stroke="#666" stroke-width="0.9" />
<path d="M1045.5,628.5 L1052.5,628.5 L1049,632 Z" fill="#444" />
<rect x="263" y="640" width="796" height="17" fill="#ebebeb" />
<rect x="263" y="657" width="796" height="1.5" fill="#fafafa" />
<text x="288.75" y="651.6" font-size="12" fill="#222" textLength="34.25" lengthAdjust="spacingAndGlyphs" >1 : 100</text>
<rect x="345.5" y="641.5" width="15.5" height="12" fill="url(#btng)" stroke="#555" stroke-width="1.1" rx="1" />
<path d="M367,647 L370,644 L381,644 L381,651 L378,654 L367,654 Z M367,647 L378,647 L381,644 M378,647 L378,654" fill="#eee" stroke="#555" stroke-width="1" />
<line x1="395.2" y1="646.5" x2="397.0" y2="646.5" stroke="#e8b820" stroke-width="1" />
<line x1="393.9698484809835" y1="649.4698484809835" x2="395.24264068711926" y2="650.7426406871193" stroke="#e8b820" stroke-width="1" />
<line x1="391.0" y1="650.7" x2="391.0" y2="652.5" stroke="#e8b820" stroke-width="1" />
<line x1="388.0301515190165" y1="649.4698484809835" x2="386.75735931288074" y2="650.7426406871193" stroke="#e8b820" stroke-width="1" />
<line x1="386.8" y1="646.5" x2="385.0" y2="646.5" stroke="#e8b820" stroke-width="1" />
<line x1="388.0301515190165" y1="643.5301515190165" x2="386.75735931288074" y2="642.2573593128807" stroke="#e8b820" stroke-width="1" />
<line x1="391.0" y1="642.3" x2="391.0" y2="640.5" stroke="#e8b820" stroke-width="1" />
<line x1="393.9698484809835" y1="643.5301515190165" x2="395.24264068711926" y2="642.2573593128807" stroke="#e8b820" stroke-width="1" />
<circle cx="391" cy="646.5" r="3.3" fill="#f8e060" stroke="#d0a020" stroke-width="0.7" />
<path d="M394,649 L400,655 M400,649 L394,655" fill="none" stroke="#e02020" stroke-width="1.8" />
<circle cx="414.5" cy="646" r="3.8" fill="#bfe2fa" stroke="#2f70b8" stroke-width="1" />
<rect x="410" y="652" width="6" height="1.5" fill="#333" />
<path d="M417,649 L423,655 M423,649 L417,655" fill="none" stroke="#e02020" stroke-width="1.8" />
<path d="M430,653 L430,645 L439,645 L439,653" fill="none" stroke="#2f70b8" stroke-width="1.5" />
<path d="M438,649 L444,655 M444,649 L438,655" fill="none" stroke="#e02020" stroke-width="1.8" />
<path d="M452,653 L452,645 L460,645 L460,653" fill="none" stroke="#2f70b8" stroke-width="1.5" />
<circle cx="463" cy="648" r="3.5" fill="#bfe0fa" stroke="#3f80c8" stroke-width="1" />
<path d="M472,646 Q476,652 480,648 Q484,644 487,650" fill="none" stroke="#444" stroke-width="1.3" />
<circle cx="500" cy="647" r="3" fill="#cfe6fb" stroke="#3f80c8" stroke-width="1" />
<rect x="515.5" y="643.5" width="13" height="10" fill="none" stroke="#333" stroke-width="1.2" stroke-dasharray="2,1"/>
<rect x="521" y="647" width="5" height="5" fill="#333" />
<rect x="536" y="644" width="10" height="10" fill="#e8a0a0" stroke="#884" stroke-width="0.7" />
<circle cx="548" cy="648" r="3.5" fill="#bfe0fa" stroke="#3f80c8" stroke-width="1" />
<path d="M557.5,642 L557.5,654 M557.5,644 L572,644 L572,648" fill="none" stroke="#444" stroke-width="1" />
<rect x="565" y="648" width="7" height="5" fill="#666" rx="1" />
<path d="M586,645 L582,648.5 L586,652 Z" fill="#444" />
<rect x="593.5" y="641.5" width="15" height="15" fill="#dedede" stroke="#bbb" stroke-width="1" />
<line x1="598" y1="645" x2="598" y2="652" stroke="#555" stroke-width="1" />
<line x1="601" y1="645" x2="601" y2="652" stroke="#555" stroke-width="1" />
<line x1="604" y1="645" x2="604" y2="652" stroke="#555" stroke-width="1" />
<rect x="610" y="641" width="431" height="16" fill="#f2f2f2" />
<path d="M1029,644 L1033,648.5 L1029,653 Z" fill="#444" />
<rect x="1053" y="654" width="1.2" height="1.2" fill="#999" />
<rect x="1056" y="654" width="1.2" height="1.2" fill="#999" />
<rect x="1056" y="651" width="1.2" height="1.2" fill="#999" />
<rect x="1053" y="651" width="1.2" height="1.2" fill="#999" />
<rect x="1056" y="648" width="1.2" height="1.2" fill="#999" />
<rect x="1059" y="173" width="2" height="485" fill="#d6d6d6" />
<rect x="1061" y="173" width="219" height="485" fill="#f0f0f0" />
<rect x="1061" y="173" width="1.2" height="485" fill="#bdbdbd" />
<text x="1065.5" y="189" font-size="12" fill="#333" textLength="52.5" lengthAdjust="spacingAndGlyphs" >Свойства</text>
<path d="M1267,180 L1275,188 M1275,180 L1267,188" fill="none" stroke="#222" stroke-width="1.8" />
<rect x="1063" y="194.5" width="215" height="69" fill="#eeeeee" stroke="#e0e0e0" stroke-width="1" />
<rect x="1067.5" y="198.5" width="65" height="65" fill="#ececec" stroke="#dedede" stroke-width="1" />
<rect x="1084.5" y="214.5" width="27" height="28" fill="url(#docg)" stroke="#555" stroke-width="1.5" rx="1.5" />
<rect x="1095.5" y="225.5" width="19" height="19" fill="#f6f6f6" stroke="#555" stroke-width="1.5" rx="1.5" />
<path d="M1095.5,225 L1095.5,215" fill="none" stroke="#666" stroke-width="1.1" stroke-dasharray="1.5,1.2"/>
<path d="M1111,225.5 L1111,221" fill="none" stroke="#f6f6f6" stroke-width="0" />
<text x="1136.7" y="235.3" font-size="12" fill="#333" textLength="62" lengthAdjust="spacingAndGlyphs" >План этажа</text>
<path d="M1268.5,229 L1277.5,229 L1273,233.5 Z" fill="#333" />
<rect x="1063.5" y="265.5" width="117.5" height="22" fill="url(#btng)" stroke="#b5b5b5" stroke-width="1" rx="2" />
<text x="1066.5" y="281" font-size="12" fill="#222" textLength="92" lengthAdjust="spacingAndGlyphs" >План этажа: 1080</text>
<rect x="1160" y="268" width="4" height="16" fill="#e6e6e6" />
<path d="M1167.5,276.5 L1176.5,276.5 L1172,281 Z" fill="#222" />
<rect x="1185.5" y="270.5" width="10" height="10" fill="#f0f0f0" stroke="#555" stroke-width="0.9" />
<line x1="1190" y1="271" x2="1190" y2="280" stroke="#555" stroke-width="0.8" />
<line x1="1186" y1="275" x2="1195" y2="275" stroke="#555" stroke-width="0.8" />
<text x="1199.5" y="279.6" font-size="12" fill="#222" textLength="74.3" lengthAdjust="spacingAndGlyphs" >Изменить тип</text>
<rect x="1063" y="288.4" width="199" height="19" fill="#dcdcdc" />
<text x="1065" y="302.5" font-size="12" fill="#222" textLength="45" lengthAdjust="spacingAndGlyphs" >Графика</text>
<path d="M1253,296 L1255,293.5 L1257,296 M1253,299 L1255,296.5 L1257,299" fill="none" stroke="#333" stroke-width="0.9" />
<rect x="1263" y="288" width="17" height="345" fill="#ebebeb" />
<path d="M1267.5,299.5 L1271,296 L1274.5,299.5 Z" fill="#444" />
<rect x="1264.5" y="307" width="14" height="128" fill="url(#thumbv)" stroke="#c4c4c4" stroke-width="1" rx="1" />
<line x1="1267" y1="367" x2="1275" y2="367" stroke="#777" stroke-width="0.8" />
<line x1="1267" y1="370" x2="1275" y2="370" stroke="#777" stroke-width="0.8" />
<line x1="1267" y1="373" x2="1275" y2="373" stroke="#777" stroke-width="0.8" />
<path d="M1267.5,622 L1274.5,622 L1271,625.5 Z" fill="#444" />
<rect x="1063" y="307.4" width="199" height="300.0" fill="#ffffff" />
<text x="1071.7" y="322.09999999999997" font-size="11.5" fill="#222" >Масштаб вида</text>
<rect x="1156.5" y="308.9" width="92.5" height="18" fill="#fff" stroke="#444" stroke-width="1.2" />
<text x="1161" y="322.09999999999997" font-size="12" fill="#222" >1 : 100</text>
<line x1="1063" y1="327.4" x2="1262" y2="327.4" stroke="#b0b0b0" stroke-width="0.8" stroke-dasharray="2,1.5" />
<text x="1071.7" y="342.09999999999997" font-size="11.5" fill="#888" >Значение мас...</text>
<text x="1158" y="342.09999999999997" font-size="12" fill="#888" >100</text>
<line x1="1063" y1="347.4" x2="1262" y2="347.4" stroke="#b0b0b0" stroke-width="0.8" stroke-dasharray="2,1.5" />
<text x="1071.7" y="362.09999999999997" font-size="11.5" fill="#222" >Отображение...</text>
<text x="1158" y="362.09999999999997" font-size="12" fill="#222" >Нормально</text>
<line x1="1063" y1="367.4" x2="1262" y2="367.4" stroke="#b0b0b0" stroke-width="0.8" stroke-dasharray="2,1.5" />
<text x="1071.7" y="382.09999999999997" font-size="11.5" fill="#222" >Уровень дета...</text>
<text x="1158" y="382.09999999999997" font-size="12" fill="#222" >Низкий</text>
<line x1="1063" y1="387.4" x2="1262" y2="387.4" stroke="#b0b0b0" stroke-width="0.8" stroke-dasharray="2,1.5" />
<text x="1071.7" y="402.09999999999997" font-size="11.5" fill="#222" >Видимость ча...</text>
<text x="1158" y="402.09999999999997" font-size="12" fill="#222" >Показать ориг...</text>
<line x1="1063" y1="407.4" x2="1262" y2="407.4" stroke="#b0b0b0" stroke-width="0.8" stroke-dasharray="2,1.5" />
<text x="1071.7" y="422.09999999999997" font-size="11.5" fill="#222" >Переопредел...</text>
<rect x="1157.5" y="409.4" width="91" height="16.5" fill="#e4e4e4" stroke="#9a9a9a" stroke-width="1" rx="2" />
<rect x="1158" y="409.9" width="90" height="7" fill="#f2f2f2" rx="2" />
<text x="1203" y="421.9" font-size="12" fill="#222" text-anchor="middle" >Изменить...</text>
<line x1="1063" y1="427.4" x2="1262" y2="427.4" stroke="#b0b0b0" stroke-width="0.8" stroke-dasharray="2,1.5" />
<text x="1071.7" y="442.09999999999997" font-size="11.5" fill="#222" >Параметры о...</text>
<rect x="1157.5" y="429.4" width="91" height="16.5" fill="#e4e4e4" stroke="#9a9a9a" stroke-width="1" rx="2" />
<rect x="1158" y="429.9" width="90" height="7" fill="#f2f2f2" rx="2" />
<text x="1203" y="441.9" font-size="12" fill="#222" text-anchor="middle" >Изменить...</text>
<line x1="1063" y1="447.4" x2="1262" y2="447.4" stroke="#b0b0b0" stroke-width="0.8" stroke-dasharray="2,1.5" />
<text x="1071.7" y="462.09999999999997" font-size="11.5" fill="#222" >Ориентация</text>
<text x="1158" y="462.09999999999997" font-size="12" fill="#222" >Условный север</text>
<line x1="1063" y1="467.4" x2="1262" y2="467.4" stroke="#b0b0b0" stroke-width="0.8" stroke-dasharray="2,1.5" />
<text x="1071.7" y="482.09999999999997" font-size="11.5" fill="#222" >Отображение...</text>
<text x="1158" y="482.09999999999997" font-size="12" fill="#222" >Подчистить вс...</text>
<line x1="1063" y1="487.4" x2="1262" y2="487.4" stroke="#b0b0b0" stroke-width="0.8" stroke-dasharray="2,1.5" />
<text x="1071.7" y="502.09999999999997" font-size="11.5" fill="#222" >Дисциплина</text>
<text x="1158" y="502.09999999999997" font-size="12" fill="#222" >Координация</text>
<line x1="1063" y1="507.4" x2="1262" y2="507.4" stroke="#b0b0b0" stroke-width="0.8" stroke-dasharray="2,1.5" />
<text x="1071.7" y="522.1" font-size="11.5" fill="#222" >Показать нев...</text>
<text x="1158" y="522.1" font-size="12" fill="#222" >По категории</text>
<line x1="1063" y1="527.4" x2="1262" y2="527.4" stroke="#b0b0b0" stroke-width="0.8" stroke-dasharray="2,1.5" />
<text x="1071.7" y="542.1" font-size="11.5" fill="#222" >Положение ц...</text>
<text x="1158" y="542.1" font-size="12" fill="#222" >Задний план</text>
<line x1="1063" y1="547.4" x2="1262" y2="547.4" stroke="#b0b0b0" stroke-width="0.8" stroke-dasharray="2,1.5" />
<text x="1071.7" y="562.1" font-size="11.5" fill="#222" >Цветовая схе...</text>
<rect x="1157.5" y="549.4" width="91" height="16.5" fill="#e4e4e4" stroke="#9a9a9a" stroke-width="1" rx="2" />
<rect x="1158" y="549.9" width="90" height="7" fill="#f2f2f2" rx="2" />
<text x="1203" y="561.9" font-size="12" fill="#222" text-anchor="middle" >&lt;нет&gt;</text>
<line x1="1063" y1="567.4" x2="1262" y2="567.4" stroke="#b0b0b0" stroke-width="0.8" stroke-dasharray="2,1.5" />
<text x="1071.7" y="582.1" font-size="11.5" fill="#222" >Графический ...</text>
<text x="1158" y="582.1" font-size="12" fill="#222" >Нет</text>
<line x1="1063" y1="587.4" x2="1262" y2="587.4" stroke="#b0b0b0" stroke-width="0.8" stroke-dasharray="2,1.5" />
<text x="1071.7" y="602.1" font-size="11.5" fill="#222" >Траектория с...</text>
<rect x="1158.5" y="590.9" width="12" height="12" fill="#f2f2f2" stroke="#aaa" stroke-width="1" />
<line x1="1063" y1="607.4" x2="1262" y2="607.4" stroke="#b0b0b0" stroke-width="0.8" stroke-dasharray="2,1.5" />
<line x1="1156.5" y1="307.4" x2="1156.5" y2="607.4" stroke="#b0b0b0" stroke-width="0.8" stroke-dasharray="2,1.5" />
<line x1="1249" y1="307.4" x2="1249" y2="607.4" stroke="#b0b0b0" stroke-width="0.8" stroke-dasharray="2,1.5" />
<rect x="1063" y="607.4" width="199" height="20" fill="#dcdcdc" />
<text x="1065" y="623.1999999999999" font-size="12" fill="#222" textLength="55" lengthAdjust="spacingAndGlyphs" >Подложка</text>
<path d="M1253,614.5 L1255,612 L1257,614.5 M1253,617.5 L1255,615 L1257,617.5" fill="none" stroke="#333" stroke-width="0.9" />
<rect x="1063" y="627.4" width="199" height="6" fill="#ffffff" />
<line x1="1156.5" y1="627.4" x2="1156.5" y2="633.4" stroke="#b0b0b0" stroke-width="0.8" stroke-dasharray="2,1.5" />
<line x1="1249" y1="627.4" x2="1249" y2="633.4" stroke="#b0b0b0" stroke-width="0.8" stroke-dasharray="2,1.5" />
<rect x="1085" y="629.9" width="6" height="1" fill="#666" />
<rect x="1165" y="629.4" width="1" height="3" fill="#666" />
<rect x="1061" y="633" width="219" height="25" fill="#f0f0f0" />
<text x="1065" y="648" font-size="12" fill="#3f73c6" textLength="123.2" lengthAdjust="spacingAndGlyphs" >Справка по свойствам</text>
<line x1="1065" y1="650.5" x2="1188" y2="650.5" stroke="#3f73c6" stroke-width="0.9" />
<rect x="1204.5" y="634.5" width="72.5" height="21" fill="#f7f7f7" stroke="#d0d0d0" stroke-width="1" rx="2" />
<text x="1210" y="649" font-size="12" fill="#888" textLength="60" lengthAdjust="spacingAndGlyphs" >Применить</text>
<text x="2" y="675.7" font-size="12" fill="#222" textLength="319" lengthAdjust="spacingAndGlyphs" >Щелчок - выбор, TAB - варианты, CTRL - добавление, SHIF</text>
<circle cx="1184" cy="666" r="2.5" fill="#f0c040" />
<path d="M1188,662 L1194,668 M1194,662 L1188,668" fill="none" stroke="#e03030" stroke-width="1.6" />
<path d="M1186,670 L1186,678 L1189,675 L1192,679" fill="none" stroke="#444" stroke-width="1" />
<path d="M1206,672 L1212,666 L1220,666 L1220,672 Z" fill="#cfe3f8" stroke="#2f6fc0" stroke-width="1" />
<path d="M1213,662 L1219,668 M1219,662 L1213,668" fill="none" stroke="#e03030" stroke-width="1.6" />
<path d="M1232,663 L1240,663 L1240,670 L1232,670 Z" fill="#f0a050" stroke="#a05020" stroke-width="0.8" />
<line x1="1236" y1="670" x2="1236" y2="678" stroke="#555" stroke-width="1.2" />
<path d="M1241,670 L1241,678 L1244,675 L1247,679" fill="none" stroke="#444" stroke-width="1" />
<path d="M1254,666 L1262,663 L1262,679 L1254,679 Z" fill="#dfeefc" stroke="#2f6fc0" stroke-width="1.2" />
<path d="M1262,662 L1268,668 M1268,662 L1262,668" fill="none" stroke="#e03030" stroke-width="1.6" />
<rect x="1274" y="664" width="3" height="14" fill="#d8d8d8" stroke="#aaa" stroke-width="0.6" />
<g id="plan" stroke-linecap="butt">
<rect x="502.5" y="307" width="66" height="57" fill="#8b0f3e" />
<line x1="503" y1="308" x2="568" y2="363" stroke="#5a0a26" stroke-width="0.7" />
<line x1="568" y1="308" x2="503" y2="363" stroke="#5a0a26" stroke-width="0.7" />
<path d="M570,307 L638,307 L638,352 L621.5,352 L621.5,364 L570,364 Z" fill="#f98b35" />
<rect x="502.5" y="479.5" width="66" height="57" fill="#8b0f3e" />
<rect x="570" y="479.5" width="68.5" height="57" fill="#f98b35" />
<line x1="572" y1="338.5" x2="637" y2="338.5" stroke="#a04a10" stroke-width="0.9" stroke-dasharray="1,4" />
<line x1="675" y1="338.5" x2="868" y2="338.5" stroke="#555" stroke-width="0.9" stroke-dasharray="1,4" />
<line x1="852.5" y1="333" x2="865" y2="333" stroke="#222" stroke-width="0.9" />
<line x1="859.5" y1="333" x2="859.5" y2="345" stroke="#222" stroke-width="1" />
<line x1="482" y1="333" x2="493" y2="333" stroke="#4a4ac8" stroke-width="0.9" />
<line x1="486.5" y1="331" x2="486.5" y2="344" stroke="#4a4ac8" stroke-width="1" />
<line x1="474" y1="306.5" x2="825" y2="306.5" stroke="#2e2e2e" stroke-width="1" stroke-dasharray="9,2.5,2,2.5" />
<line x1="474" y1="364.5" x2="825" y2="364.5" stroke="#2e2e2e" stroke-width="1" stroke-dasharray="9,2.5,2,2.5" />
<line x1="474" y1="422.5" x2="825" y2="422.5" stroke="#2e2e2e" stroke-width="1" stroke-dasharray="9,2.5,2,2.5" />
<line x1="474" y1="479.5" x2="825" y2="479.5" stroke="#2e2e2e" stroke-width="1" stroke-dasharray="9,2.5,2,2.5" />
<line x1="474" y1="536.5" x2="825" y2="536.5" stroke="#2e2e2e" stroke-width="1" stroke-dasharray="9,2.5,2,2.5" />
<line x1="501.5" y1="290" x2="501.5" y2="579" stroke="#2e2e2e" stroke-width="1" stroke-dasharray="9,2.5,2,2.5" />
<line x1="570.5" y1="290" x2="570.5" y2="579" stroke="#2e2e2e" stroke-width="1" stroke-dasharray="9,2.5,2,2.5" />
<line x1="639.5" y1="290" x2="639.5" y2="579" stroke="#2e2e2e" stroke-width="1" stroke-dasharray="9,2.5,2,2.5" />
<line x1="673.5" y1="290" x2="673.5" y2="579" stroke="#2e2e2e" stroke-width="1" stroke-dasharray="9,2.5,2,2.5" />
<line x1="742.5" y1="290" x2="742.5" y2="579" stroke="#2e2e2e" stroke-width="1" stroke-dasharray="9,2.5,2,2.5" />
<line x1="812.5" y1="290" x2="812.5" y2="579" stroke="#2e2e2e" stroke-width="1" stroke-dasharray="9,2.5,2,2.5" />
<rect x="496" y="301" width="318" height="5.5" fill="#fff" />
<rect x="496" y="537.5" width="318" height="5.5" fill="#fff" />
<rect x="494" y="302" width="7.5" height="62" fill="#fff" />
<rect x="494" y="480" width="7.5" height="57" fill="#fff" />
<rect x="811" y="302" width="7" height="62" fill="#fff" />
<rect x="811" y="480" width="7" height="57" fill="#fff" />
<line x1="493" y1="299.5" x2="819" y2="299.5" stroke="#8a8a8a" stroke-width="2" />
<line x1="495.5" y1="301.5" x2="810" y2="301.5" stroke="#555" stroke-width="0.8" />
<line x1="502" y1="306.8" x2="812" y2="306.8" stroke="#8a8a8a" stroke-width="0.9" />
<line x1="493" y1="543.5" x2="819" y2="543.5" stroke="#8a8a8a" stroke-width="2" />
<line x1="495.5" y1="541.5" x2="810" y2="541.5" stroke="#555" stroke-width="0.8" />
<line x1="502" y1="536.8" x2="812" y2="536.8" stroke="#8a8a8a" stroke-width="0.9" />
<line x1="493.5" y1="299" x2="493.5" y2="364" stroke="#333" stroke-width="1" />
<line x1="496" y1="302" x2="496" y2="364" stroke="#666" stroke-width="0.8" />
<line x1="493.5" y1="442.5" x2="493.5" y2="544" stroke="#333" stroke-width="1" />
<line x1="496" y1="442.5" x2="496" y2="541" stroke="#666" stroke-width="0.8" />
<rect x="494" y="326" width="4" height="14" fill="#a8a8a8" />
<rect x="494" y="502" width="4" height="17" fill="#a8a8a8" />
<rect x="493.5" y="364.5" width="8" height="34.5" fill="none" stroke="#444" stroke-width="0.9" />
<rect x="493.5" y="410.5" width="8" height="21" fill="none" stroke="#444" stroke-width="0.9" />
<rect x="493.5" y="442.5" width="8" height="37" fill="none" stroke="#444" stroke-width="0.9" />
<line x1="507.3" y1="401.8" x2="502.9" y2="410.6" stroke="#333" stroke-width="0.8" />
<line x1="502.9" y1="431" x2="507.3" y2="439.8" stroke="#333" stroke-width="0.8" />
<line x1="818.5" y1="299" x2="818.5" y2="400.5" stroke="#a8a8a8" stroke-width="2.2" />
<line x1="818.5" y1="410" x2="818.5" y2="435" stroke="#a8a8a8" stroke-width="2.2" />
<line x1="818.5" y1="440.5" x2="818.5" y2="544" stroke="#a8a8a8" stroke-width="2.2" />
<line x1="810.5" y1="307" x2="810.5" y2="364" stroke="#444" stroke-width="0.9" />
<rect x="810" y="326" width="7" height="13.5" fill="#fff" stroke="#222" stroke-width="1" />
<rect x="814" y="327" width="3" height="11" fill="#222" />
<rect x="810" y="364.5" width="7" height="36" fill="none" stroke="#555" stroke-width="0.9" />
<rect x="810" y="410.5" width="7" height="25" fill="none" stroke="#555" stroke-width="0.9" />
<rect x="810" y="440.5" width="7" height="40" fill="none" stroke="#555" stroke-width="0.9" />
<line x1="810.5" y1="480" x2="810.5" y2="537" stroke="#444" stroke-width="0.9" />
<rect x="810" y="502" width="7" height="13" fill="#fff" stroke="#222" stroke-width="1" />
<rect x="814" y="503" width="3" height="11" fill="#222" />
<line x1="806" y1="398" x2="812" y2="404" stroke="#333" stroke-width="0.8" />
<line x1="812" y1="437" x2="818" y2="444" stroke="#333" stroke-width="0.8" />
<rect x="524.6" y="300.5" width="18.299999999999955" height="6" fill="#ececec" stroke="#555" stroke-width="0.8" />
<line x1="524.6" y1="302" x2="542.9" y2="302" stroke="#222" stroke-width="1.5" />
<rect x="597.5" y="300.5" width="18.0" height="6" fill="#ececec" stroke="#555" stroke-width="0.8" />
<line x1="597.5" y1="302" x2="615.5" y2="302" stroke="#222" stroke-width="1.5" />
<rect x="697.9" y="300.5" width="17.399999999999977" height="6" fill="#ececec" stroke="#555" stroke-width="0.8" />
<line x1="697.9" y1="302" x2="715.3" y2="302" stroke="#222" stroke-width="1.5" />
<rect x="770.5" y="300.5" width="18.5" height="6" fill="#ececec" stroke="#555" stroke-width="0.8" />
<line x1="770.5" y1="302" x2="789" y2="302" stroke="#222" stroke-width="1.5" />
<rect x="643" y="300.5" width="20" height="6" fill="#fff" stroke="#444" stroke-width="0.8" />
<line x1="643" y1="302" x2="663" y2="302" stroke="#111" stroke-width="1.6" />
<rect x="522" y="537" width="17.399999999999977" height="6" fill="#ececec" stroke="#555" stroke-width="0.8" />
<line x1="522" y1="541.5" x2="539.4" y2="541.5" stroke="#222" stroke-width="1.5" />
<rect x="597.7" y="537" width="17.299999999999955" height="6" fill="#ececec" stroke="#555" stroke-width="0.8" />
<line x1="597.7" y1="541.5" x2="615" y2="541.5" stroke="#222" stroke-width="1.5" />
<rect x="647.8" y="537" width="17.40000000000009" height="6" fill="#ececec" stroke="#555" stroke-width="0.8" />
<line x1="647.8" y1="541.5" x2="665.2" y2="541.5" stroke="#222" stroke-width="1.5" />
<rect x="697.9" y="537" width="17.0" height="6" fill="#ececec" stroke="#555" stroke-width="0.8" />
<line x1="697.9" y1="541.5" x2="714.9" y2="541.5" stroke="#222" stroke-width="1.5" />
<rect x="772.2" y="537" width="18.399999999999977" height="6" fill="#ececec" stroke="#555" stroke-width="0.8" />
<line x1="772.2" y1="541.5" x2="790.6" y2="541.5" stroke="#222" stroke-width="1.5" />
<line x1="586" y1="302" x2="596" y2="307" stroke="#333" stroke-width="0.8" />
<line x1="715.3" y1="307" x2="727" y2="301" stroke="#333" stroke-width="0.8" />
<line x1="586.4" y1="542" x2="597" y2="537" stroke="#333" stroke-width="0.8" />
<line x1="715" y1="537" x2="727" y2="542" stroke="#333" stroke-width="0.8" />
<path d="M567.5,299 L567.5,282.5 L642,282.5 L642,299" fill="none" stroke="#333" stroke-width="1" />
<path d="M569.5,299 L569.5,284.5 L640,284.5 L640,299" fill="none" stroke="#888" stroke-width="0.8" />
<path d="M567.5,544 L567.5,560.5 L642,560.5 L642,544" fill="none" stroke="#333" stroke-width="1" />
<path d="M569.5,544 L569.5,558.5 L640,558.5 L640,544" fill="none" stroke="#888" stroke-width="0.8" />
<path d="M671.7,299 L671.7,282.5 L745.3,282.5 L745.3,299" fill="none" stroke="#333" stroke-width="1" />
<path d="M673.7,299 L673.7,284.5 L743.3,284.5 L743.3,299" fill="none" stroke="#888" stroke-width="0.8" />
<path d="M671.7,544 L671.7,560.5 L745.3,560.5 L745.3,544" fill="none" stroke="#333" stroke-width="1" />
<path d="M673.7,544 L673.7,558.5 L743.3,558.5 L743.3,544" fill="none" stroke="#888" stroke-width="0.8" />
<line x1="473" y1="306.5" x2="489" y2="306.5" stroke="#333" stroke-width="0.9" />
<circle cx="467" cy="306.5" r="6" fill="#fff" stroke="#333" stroke-width="0.9" />
<text x="467" y="309.1" font-size="7" fill="#333" text-anchor="middle" >Д</text>
<line x1="473" y1="364.5" x2="489" y2="364.5" stroke="#333" stroke-width="0.9" />
<circle cx="467" cy="364.5" r="6" fill="#fff" stroke="#333" stroke-width="0.9" />
<text x="467" y="367.1" font-size="7" fill="#333" text-anchor="middle" >Г</text>
<line x1="473" y1="422.5" x2="489" y2="422.5" stroke="#333" stroke-width="0.9" />
<circle cx="467" cy="422.5" r="6" fill="#fff" stroke="#333" stroke-width="0.9" />
<text x="467" y="425.1" font-size="7" fill="#333" text-anchor="middle" >В</text>
<line x1="473" y1="479.5" x2="489" y2="479.5" stroke="#333" stroke-width="0.9" />
<circle cx="467" cy="479.5" r="6" fill="#fff" stroke="#333" stroke-width="0.9" />
<text x="467" y="482.1" font-size="7" fill="#333" text-anchor="middle" >Б</text>
<line x1="473" y1="536.5" x2="489" y2="536.5" stroke="#333" stroke-width="0.9" />
<circle cx="467" cy="536.5" r="6" fill="#fff" stroke="#333" stroke-width="0.9" />
<text x="467" y="539.1" font-size="7" fill="#333" text-anchor="middle" >А</text>
<line x1="501.5" y1="566" x2="501.5" y2="579" stroke="#333" stroke-width="0.9" />
<circle cx="501.5" cy="585" r="6" fill="#fff" stroke="#333" stroke-width="0.9" />
<text x="501.5" y="587.6" font-size="7" fill="#333" text-anchor="middle" >1</text>
<line x1="570.5" y1="566" x2="570.5" y2="579" stroke="#333" stroke-width="0.9" />
<circle cx="570.5" cy="585" r="6" fill="#fff" stroke="#333" stroke-width="0.9" />
<text x="570.5" y="587.6" font-size="7" fill="#333" text-anchor="middle" >2</text>
<line x1="639.5" y1="566" x2="639.5" y2="579" stroke="#333" stroke-width="0.9" />
<circle cx="639.5" cy="585" r="6" fill="#fff" stroke="#333" stroke-width="0.9" />
<text x="639.5" y="587.6" font-size="7" fill="#333" text-anchor="middle" >3</text>
<line x1="673.5" y1="566" x2="673.5" y2="579" stroke="#333" stroke-width="0.9" />
<circle cx="673.5" cy="585" r="6" fill="#fff" stroke="#333" stroke-width="0.9" />
<text x="673.5" y="587.6" font-size="7" fill="#333" text-anchor="middle" >4</text>
<line x1="742.5" y1="566" x2="742.5" y2="579" stroke="#333" stroke-width="0.9" />
<circle cx="742.5" cy="585" r="6" fill="#fff" stroke="#333" stroke-width="0.9" />
<text x="742.5" y="587.6" font-size="7" fill="#333" text-anchor="middle" >5</text>
<line x1="812.5" y1="566" x2="812.5" y2="579" stroke="#333" stroke-width="0.9" />
<circle cx="812.5" cy="585" r="6" fill="#fff" stroke="#333" stroke-width="0.9" />
<text x="812.5" y="587.6" font-size="7" fill="#333" text-anchor="middle" >6</text>
<line x1="691" y1="364.5" x2="812" y2="364.5" stroke="#222" stroke-width="1.3" />
<line x1="691" y1="366.5" x2="810" y2="366.5" stroke="#888" stroke-width="1" />
<line x1="742.5" y1="479.5" x2="812" y2="479.5" stroke="#222" stroke-width="1.3" />
<line x1="744" y1="481.5" x2="810" y2="481.5" stroke="#888" stroke-width="1" />
<line x1="502" y1="422" x2="552" y2="422" stroke="#111" stroke-width="1.6" />
<line x1="502" y1="424" x2="552" y2="424" stroke="#999" stroke-width="1.2" />
<line x1="594" y1="422" x2="622" y2="422" stroke="#111" stroke-width="1.6" />
<line x1="594" y1="424" x2="622" y2="424" stroke="#999" stroke-width="1.2" />
<line x1="691" y1="422" x2="742" y2="422" stroke="#111" stroke-width="1.6" />
<line x1="691" y1="424" x2="742" y2="424" stroke="#999" stroke-width="1.2" />
<line x1="760" y1="422" x2="812" y2="422" stroke="#111" stroke-width="1.6" />
<line x1="760" y1="424" x2="810" y2="424" stroke="#999" stroke-width="1.2" />
<line x1="570" y1="479.5" x2="638" y2="479.5" stroke="#333" stroke-width="1.0" />
<line x1="502" y1="364" x2="569" y2="364" stroke="#333" stroke-width="1.0" />
<line x1="742.5" y1="307" x2="742.5" y2="364" stroke="#222" stroke-width="1.4" />
<line x1="744.5" y1="309" x2="744.5" y2="362" stroke="#999" stroke-width="0.8" />
<line x1="742.5" y1="403.8" x2="742.5" y2="537" stroke="#222" stroke-width="1.4" />
<line x1="744.5" y1="424" x2="744.5" y2="535" stroke="#999" stroke-width="0.8" />
<line x1="673.5" y1="307" x2="673.5" y2="364" stroke="#111" stroke-width="1.8" />
<line x1="673.5" y1="456.8" x2="673.5" y2="537" stroke="#222" stroke-width="1.4" />
<line x1="675.5" y1="458" x2="675.5" y2="535" stroke="#999" stroke-width="0.8" />
<line x1="673.5" y1="496.7" x2="742.5" y2="496.7" stroke="#222" stroke-width="1.0" />
<line x1="675" y1="498.7" x2="741" y2="498.7" stroke="#999" stroke-width="0.8" />
<line x1="673.5" y1="440.5" x2="742.5" y2="440.5" stroke="#fff" stroke-width="0" />
<path d="M621.5,352 L621.5,388 L640,388 L640,364" fill="none" stroke="#222" stroke-width="1" />
<rect x="622" y="354" width="2" height="33" fill="#a8a8a8" />
<path d="M691,352 L673.5,352 M691,352 L691,388 L673.5,388 L673.5,364" fill="none" stroke="#222" stroke-width="1" />
<rect x="689" y="354" width="2" height="33" fill="#a8a8a8" />
<line x1="622.9" y1="390" x2="629" y2="400.4" stroke="#333" stroke-width="0.8" />
<line x1="691.4" y1="390" x2="684.2" y2="400.4" stroke="#333" stroke-width="0.8" />
<path d="M621.5,456.8 L640,456.8 L640,479.5" fill="none" stroke="#222" stroke-width="1" />
<path d="M691.7,456.8 L673.5,456.8" fill="none" stroke="#222" stroke-width="1" />
<rect x="690" y="453.8" width="2" height="4" fill="#333" />
<line x1="629" y1="443.3" x2="622.9" y2="452.5" stroke="#333" stroke-width="0.8" />
<line x1="684.2" y1="443.3" x2="691.4" y2="452.5" stroke="#333" stroke-width="0.8" />
<rect x="620.5" y="402.4" width="3" height="38" fill="#a8a8a8" />
<rect x="758.5" y="380.5" width="3" height="41" fill="#a8a8a8" />
<line x1="760" y1="381" x2="766.4" y2="371" stroke="#333" stroke-width="0.8" />
<line x1="748.7" y1="414.7" x2="759" y2="422" stroke="#333" stroke-width="0.8" />
<line x1="722.4" y1="356.7" x2="733.7" y2="362.9" stroke="#333" stroke-width="0.8" />
<line x1="603.4" y1="370.7" x2="613.6" y2="364.5" stroke="#333" stroke-width="0.8" />
<line x1="628" y1="348" x2="636" y2="352" stroke="#333" stroke-width="0.8" />
<path d="M726.5,403.8 L690.7,403.8 L690.7,440.5 L742.5,440.5" fill="none" stroke="#222" stroke-width="1" />
<line x1="692.5" y1="405.8" x2="726" y2="405.8" stroke="#999" stroke-width="0.8" />
<line x1="692.5" y1="438.5" x2="741" y2="438.5" stroke="#999" stroke-width="0.8" />
<line x1="726.5" y1="403.8" x2="737.8" y2="411" stroke="#333" stroke-width="0.8" />
<rect x="740.5" y="403.8" width="3" height="6" fill="#333" />
<line x1="552.5" y1="364" x2="552.5" y2="376.2" stroke="#222" stroke-width="1.2" />
<line x1="552.5" y1="386.4" x2="552.5" y2="455.8" stroke="#222" stroke-width="1.2" />
<line x1="554.5" y1="388" x2="554.5" y2="444" stroke="#999" stroke-width="0.8" />
<line x1="552.5" y1="468" x2="552.5" y2="479.5" stroke="#222" stroke-width="1.2" />
<line x1="546.8" y1="378.4" x2="553.3" y2="386.4" stroke="#333" stroke-width="0.8" />
<line x1="546.5" y1="465" x2="551.6" y2="456.8" stroke="#333" stroke-width="0.8" />
<rect x="553.5" y="398.5" width="41" height="46" fill="#f3f3fb" stroke="#333" stroke-width="1" />
<line x1="558.05" y1="399" x2="558.05" y2="444" stroke="#b9b9d6" stroke-width="0.5" />
<line x1="562.6" y1="399" x2="562.6" y2="444" stroke="#b9b9d6" stroke-width="0.5" />
<line x1="567.15" y1="399" x2="567.15" y2="444" stroke="#b9b9d6" stroke-width="0.5" />
<line x1="571.7" y1="399" x2="571.7" y2="444" stroke="#b9b9d6" stroke-width="0.5" />
<line x1="576.25" y1="399" x2="576.25" y2="444" stroke="#b9b9d6" stroke-width="0.5" />
<line x1="580.8" y1="399" x2="580.8" y2="444" stroke="#b9b9d6" stroke-width="0.5" />
<line x1="585.35" y1="399" x2="585.35" y2="444" stroke="#b9b9d6" stroke-width="0.5" />
<line x1="589.9" y1="399" x2="589.9" y2="444" stroke="#b9b9d6" stroke-width="0.5" />
<line x1="554" y1="403.1" x2="594" y2="403.1" stroke="#b9b9d6" stroke-width="0.5" />
<line x1="554" y1="407.7" x2="594" y2="407.7" stroke="#b9b9d6" stroke-width="0.5" />
<line x1="554" y1="412.3" x2="594" y2="412.3" stroke="#b9b9d6" stroke-width="0.5" />
<line x1="554" y1="416.9" x2="594" y2="416.9" stroke="#b9b9d6" stroke-width="0.5" />
<line x1="554" y1="421.5" x2="594" y2="421.5" stroke="#b9b9d6" stroke-width="0.5" />
<line x1="554" y1="426.1" x2="594" y2="426.1" stroke="#b9b9d6" stroke-width="0.5" />
<line x1="554" y1="430.7" x2="594" y2="430.7" stroke="#b9b9d6" stroke-width="0.5" />
<line x1="554" y1="435.3" x2="594" y2="435.3" stroke="#b9b9d6" stroke-width="0.5" />
<line x1="554" y1="439.9" x2="594" y2="439.9" stroke="#b9b9d6" stroke-width="0.5" />
<rect x="579" y="399" width="3.5" height="22" fill="#aaa" />
<line x1="555" y1="400.5" x2="593" y2="400.5" stroke="#888" stroke-width="0.8" />
<line x1="555" y1="442.5" x2="593" y2="442.5" stroke="#888" stroke-width="0.8" />
<rect x="593" y="399" width="3" height="8" fill="#aaa" />
<rect x="593" y="437" width="3" height="8" fill="#aaa" />
<line x1="599.3" y1="406.5" x2="594.2" y2="414.7" stroke="#333" stroke-width="0.8" />
<line x1="594.2" y1="428" x2="600.4" y2="437.2" stroke="#333" stroke-width="0.8" />
<line x1="603.4" y1="473" x2="611.6" y2="478" stroke="#333" stroke-width="0.8" />
<line x1="552.3" y1="456.6" x2="547.2" y2="464.8" stroke="#333" stroke-width="0.8" />
<line x1="594.5" y1="398.5" x2="594.5" y2="444.5" stroke="#222" stroke-width="1.2" />
<rect x="499.0" y="303.2" width="5" height="6.6" fill="#e2e2e2" stroke="#333" stroke-width="0.9" />
<rect x="499.0" y="361.2" width="5" height="6.6" fill="#e2e2e2" stroke="#333" stroke-width="0.9" />
<rect x="499.0" y="419.2" width="5" height="6.6" fill="#e2e2e2" stroke="#333" stroke-width="0.9" />
<rect x="499.0" y="476.2" width="5" height="6.6" fill="#e2e2e2" stroke="#333" stroke-width="0.9" />
<rect x="499.0" y="533.2" width="5" height="6.6" fill="#e2e2e2" stroke="#333" stroke-width="0.9" />
<rect x="568.0" y="303.2" width="5" height="6.6" fill="#e2e2e2" stroke="#333" stroke-width="0.9" />
<rect x="568.0" y="361.2" width="5" height="6.6" fill="#e2e2e2" stroke="#333" stroke-width="0.9" />
<rect x="568.0" y="419.2" width="5" height="6.6" fill="#e2e2e2" stroke="#333" stroke-width="0.9" />
<rect x="568.0" y="476.2" width="5" height="6.6" fill="#e2e2e2" stroke="#333" stroke-width="0.9" />
<rect x="568.0" y="533.2" width="5" height="6.6" fill="#e2e2e2" stroke="#333" stroke-width="0.9" />
<rect x="637.0" y="303.2" width="5" height="6.6" fill="#e2e2e2" stroke="#333" stroke-width="0.9" />
<rect x="637.0" y="361.2" width="5" height="6.6" fill="#e2e2e2" stroke="#333" stroke-width="0.9" />
<rect x="637.0" y="419.2" width="5" height="6.6" fill="#e2e2e2" stroke="#333" stroke-width="0.9" />
<rect x="637.0" y="476.2" width="5" height="6.6" fill="#e2e2e2" stroke="#333" stroke-width="0.9" />
<rect x="637.0" y="533.2" width="5" height="6.6" fill="#e2e2e2" stroke="#333" stroke-width="0.9" />
<rect x="671.0" y="303.2" width="5" height="6.6" fill="#e2e2e2" stroke="#333" stroke-width="0.9" />
<rect x="671.0" y="361.2" width="5" height="6.6" fill="#e2e2e2" stroke="#333" stroke-width="0.9" />
<rect x="671.0" y="419.2" width="5" height="6.6" fill="#e2e2e2" stroke="#333" stroke-width="0.9" />
<rect x="671.0" y="476.2" width="5" height="6.6" fill="#e2e2e2" stroke="#333" stroke-width="0.9" />
<rect x="671.0" y="533.2" width="5" height="6.6" fill="#e2e2e2" stroke="#333" stroke-width="0.9" />
<rect x="740.0" y="303.2" width="5" height="6.6" fill="#e2e2e2" stroke="#333" stroke-width="0.9" />
<rect x="740.0" y="361.2" width="5" height="6.6" fill="#e2e2e2" stroke="#333" stroke-width="0.9" />
<rect x="740.0" y="419.2" width="5" height="6.6" fill="#e2e2e2" stroke="#333" stroke-width="0.9" />
<rect x="740.0" y="476.2" width="5" height="6.6" fill="#e2e2e2" stroke="#333" stroke-width="0.9" />
<rect x="740.0" y="533.2" width="5" height="6.6" fill="#e2e2e2" stroke="#333" stroke-width="0.9" />
<rect x="810.0" y="303.2" width="5" height="6.6" fill="#e2e2e2" stroke="#333" stroke-width="0.9" />
<rect x="810.0" y="361.2" width="5" height="6.6" fill="#e2e2e2" stroke="#333" stroke-width="0.9" />
<rect x="810.0" y="419.2" width="5" height="6.6" fill="#e2e2e2" stroke="#333" stroke-width="0.9" />
<rect x="810.0" y="476.2" width="5" height="6.6" fill="#e2e2e2" stroke="#333" stroke-width="0.9" />
<rect x="810.0" y="533.2" width="5" height="6.6" fill="#e2e2e2" stroke="#333" stroke-width="0.9" />
<rect x="642.5" y="307.5" width="29.5" height="48.5" fill="#fff" stroke="#111" stroke-width="1.2" />
<line x1="643" y1="320.0" x2="671.5" y2="320.0" stroke="#222" stroke-width="0.9" />
<line x1="643" y1="323.7" x2="671.5" y2="323.7" stroke="#222" stroke-width="0.9" />
<line x1="643" y1="327.4" x2="671.5" y2="327.4" stroke="#222" stroke-width="0.9" />
<line x1="643" y1="331.1" x2="671.5" y2="331.1" stroke="#222" stroke-width="0.9" />
<line x1="643" y1="334.8" x2="671.5" y2="334.8" stroke="#222" stroke-width="0.9" />
<line x1="643" y1="338.5" x2="671.5" y2="338.5" stroke="#222" stroke-width="0.9" />
<line x1="643" y1="342.2" x2="671.5" y2="342.2" stroke="#222" stroke-width="0.9" />
<line x1="643" y1="345.9" x2="671.5" y2="345.9" stroke="#222" stroke-width="0.9" />
<line x1="643" y1="349.6" x2="671.5" y2="349.6" stroke="#222" stroke-width="0.9" />
<line x1="643" y1="353.3" x2="671.5" y2="353.3" stroke="#222" stroke-width="0.9" />
<line x1="655.7" y1="318" x2="655.7" y2="355.5" stroke="#111" stroke-width="2" />
<line x1="641" y1="308" x2="641" y2="356" stroke="#111" stroke-width="1.6" />
<line x1="672" y1="308" x2="672" y2="356" stroke="#111" stroke-width="1.6" />
<line x1="644" y1="337" x2="658" y2="331" stroke="#333" stroke-width="0.8" />
<path d="M497,364 A88 88 0 0 0 497,480" fill="none" stroke="#111" stroke-width="2.2" />
<path d="M817,364 A88 88 0 0 1 817,480" fill="none" stroke="#111" stroke-width="2.2" />
<path d="M820,364 A88 88 0 0 1 820,480" fill="none" stroke="#999" stroke-width="0.8" />
<line x1="647" y1="240" x2="647" y2="596" stroke="#a0a0a0" stroke-width="1.3" />
<line x1="640" y1="240.5" x2="647" y2="240.5" stroke="#a0a0a0" stroke-width="1.6" />
<line x1="652.5" y1="237" x2="652.5" y2="248" stroke="#222" stroke-width="1.1" />
<line x1="640" y1="593.5" x2="652" y2="593.5" stroke="#7070d0" stroke-width="1.3" />
<line x1="652.5" y1="588" x2="652.5" y2="599" stroke="#7070d0" stroke-width="1.1" />
<line x1="475" y1="427.5" x2="853" y2="427.5" stroke="#222" stroke-width="0.9" />
<line x1="842" y1="423.7" x2="853.4" y2="423.7" stroke="#222" stroke-width="0.9" />
<line x1="849.5" y1="422" x2="849.5" y2="434.3" stroke="#222" stroke-width="1.1" />
<line x1="474" y1="422" x2="490" y2="422" stroke="#4a4ad0" stroke-width="1.4" />
<circle cx="629" cy="265.3" r="7" fill="#fff" stroke="#222" stroke-width="0.9" />
<circle cx="629" cy="265.3" r="0.6" fill="#444" />
<path d="M625,270.8 L633,270.8 L629,275.3 Z" fill="#111" />
<circle cx="847.2" cy="397.4" r="7" fill="#fff" stroke="#222" stroke-width="0.9" />
<circle cx="847.2" cy="397.4" r="0.6" fill="#444" />
<path d="M841.7,393.4 L841.7,401.4 L837.2,397.4 Z" fill="#111" />
<circle cx="609.7" cy="601" r="7" fill="#fff" stroke="#222" stroke-width="0.9" />
<circle cx="609.7" cy="601" r="0.6" fill="#444" />
<path d="M605.7,595.5 L613.7,595.5 L609.7,591 Z" fill="#111" />
<circle cx="434" cy="424" r="7" fill="#fff" stroke="#222" stroke-width="0.9" />
<circle cx="434" cy="424" r="0.6" fill="#444" />
<path d="M439.5,420 L439.5,428 L444,424 Z" fill="#111" />
</g>
<circle cx="347.3" cy="183.6" r="19" fill="#fff200" style="mix-blend-mode:multiply" filter="url(#blur1)"/>
<path d="M346,184.5 L346,199.5 L349.8,196 L352.6,201.5 L354.8,200.5 L352.2,195.2 L357.5,195 Z" fill="#fff" stroke="#222" stroke-width="1" />
</svg>
</body></html>
